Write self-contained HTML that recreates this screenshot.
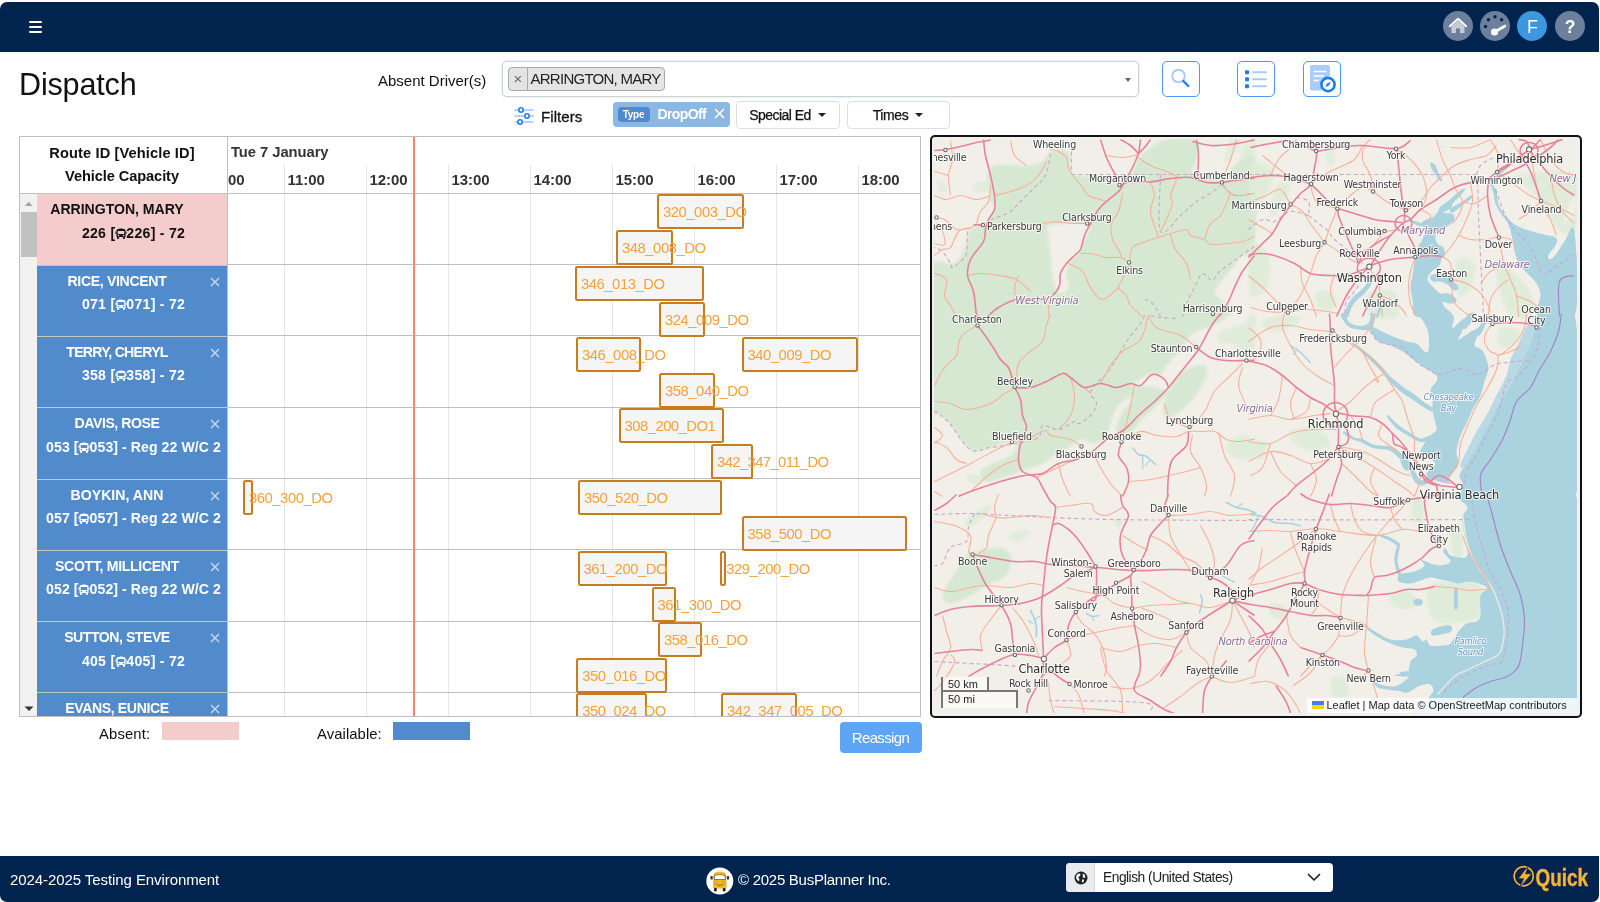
<!DOCTYPE html>
<html lang="en">
<head>
<meta charset="utf-8">
<title>Dispatch</title>
<style>
*{box-sizing:border-box;margin:0;padding:0}
html,body{width:1600px;height:902px;overflow:hidden;background:#fff}
body{font-family:"Liberation Sans",sans-serif;color:#111;position:relative;will-change:transform}
.abs{position:absolute}
#topbar{position:absolute;left:0;top:2px;width:1599px;height:49.5px;background:#00244d;border-radius:7px 7px 0 0}
#burger{position:absolute;left:29px;top:19px;width:13px;height:12px}
#burger i{position:absolute;left:0;width:13px;height:2px;background:#fff;border-radius:1px}
.circ{position:absolute;top:9px;width:30px;height:30px;border-radius:50%;background:#6c809b}
.circ svg{position:absolute;left:0;top:0}
#title{position:absolute;left:19px;top:64px;font-size:30.5px;line-height:40px;color:#111;white-space:nowrap}
#lblAbsent{position:absolute;left:378px;top:71px;font-size:15px;line-height:20px;color:#111}
#sel{position:absolute;left:502px;top:61px;width:637px;height:36px;border:1px solid #ccd3d6;border-radius:5px;background:#fff;box-shadow:0 0 0 1px #eef3f5}
#tag{position:absolute;left:5px;top:5px;width:157px;height:24px;background:#e4e4e4;border:1px solid #aaa;border-radius:4px;font-size:15px;line-height:22px;color:#222}
#tag .x{position:absolute;left:0;top:0;width:19px;height:22px;border-right:1px solid #aaa;text-align:center;color:#666;font-size:15px}
#tag .t{position:absolute;left:21.5px;top:0;white-space:nowrap}
#selarrow{position:absolute;left:622px;top:15.5px;width:0;height:0;border-left:3.5px solid transparent;border-right:3.5px solid transparent;border-top:4.5px solid #666}
.ibtn{position:absolute;top:61px;width:38px;height:36px;border:1px solid #4a99f5;border-radius:5px;background:#fff}
.ibtn svg{position:absolute;left:0;top:0}
#filters{position:absolute;left:541px;top:107px;font-size:15px;line-height:20px;color:#111;-webkit-text-stroke:0.3px #111}
#chip{position:absolute;left:612.5px;top:101.5px;width:117.5px;height:25.5px;background:#8db7e3;border-radius:4px}
#chip .b{position:absolute;left:5px;top:5.5px;width:32px;height:15px;background:#4f8ad0;border-radius:4px;color:#fff;font-size:10px;font-weight:bold;line-height:15px;text-align:center;letter-spacing:-0.3px}
#chip .t{position:absolute;left:45px;top:2px;color:#fff;font-size:14px;line-height:20px;font-weight:bold;letter-spacing:-0.6px}
#chip .x{position:absolute;left:101px;top:6px}
.dd{position:absolute;top:100.5px;height:28px;border:1px solid #dcdfe3;border-radius:4px;background:#fff;font-size:14px;line-height:26px;color:#111;text-align:center;-webkit-text-stroke:0.25px #111}
.dd b{display:inline-block;width:0;height:0;border-left:4px solid transparent;border-right:4px solid transparent;border-top:4.5px solid #222;vertical-align:middle;margin-left:7px;margin-top:-2px}
#tl{position:absolute;left:19px;top:136px;width:902px;height:580.5px;border:1px solid #bfbfbf;overflow:hidden;background:#fff}
#tl .hd1{position:absolute;left:0;top:0;width:204px;height:57px;text-align:center;font-weight:bold;font-size:14.6px;line-height:23px;padding-top:5px;color:#111}
#tl .hline{position:absolute;left:0;height:1px;background:#bfbfbf}
#tl .vline{position:absolute;top:28px;width:1px;height:560px;background:#e5e5e5}
#tl .hr{position:absolute;top:34px;font-size:15px;font-weight:bold;line-height:18px;color:#333;letter-spacing:-0.05px}
#now{position:absolute;left:393px;top:0;width:2px;height:580px;background:#ff7f6e;z-index:5}
#sb{position:absolute;left:0;top:57px;width:17px;height:524px;background:#f1f1f1}
#sb .th{position:absolute;left:1px;top:18px;width:15.5px;height:44.5px;background:#c1c1c1}
.row{position:absolute;left:17px;width:189.5px;height:71.4px;border-top:1px solid #c4c4c4;font-weight:bold;font-size:14.1px;line-height:24px;text-align:center;color:#fff;background:#528bcc}
.row.ab{background:#f5cccc;color:#111}
.row .n{position:absolute;left:0;width:160px;top:3px;white-space:nowrap}
.row .v{position:absolute;left:2px;width:189px;top:26.5px;white-space:nowrap}
.row .x{position:absolute;left:173px;top:11px}
.it{position:absolute;height:35px;border:2px solid #c77c20;border-radius:2.5px;background:#f5f5f5;color:#f4a23c;font-size:14.8px;line-height:32px;white-space:nowrap;z-index:3}
.it span{margin-left:4px}
#legA,#legB{position:absolute;top:724px;font-size:14.8px;line-height:20px;color:#111}
.sw{position:absolute;top:721.5px;width:77px;height:18.5px}
#reassign{position:absolute;left:839.5px;top:721.5px;width:82px;height:31.5px;background:#5ea5f6;border-radius:4px;color:#fff;font-size:15px;line-height:31px;text-align:center}
#footer{position:absolute;left:0;top:855.5px;width:1599px;height:46.5px;background:#00244d;border-radius:0 0 7px 7px;color:#fff;font-size:15px}
#lang{position:absolute;left:1066px;top:7.5px;width:266.5px;height:29px;background:#fff;border-radius:4px;overflow:hidden;color:#222;font-size:14px;line-height:29px}
#lang .g{position:absolute;left:0;top:0;width:29px;height:29px;background:#e9ecef;border-right:1px solid #d5d9dd}
#mapbox{position:absolute;left:930px;top:135px;width:652px;height:583px;border:2px solid #111;border-radius:5px;background:#f0f0f0;overflow:hidden}
.sc{position:absolute;border:2px solid #777;background:rgba(255,255,255,0.6);font-size:11px;line-height:13px;padding:1px 0 0 5px;color:#222;white-space:nowrap}
#attr{position:absolute;left:373px;top:559px;width:270.500px;height:15.500px;background:rgba(255,255,255,0.8);font-size:11px;line-height:15.500px;padding-left:5px;color:#222;white-space:nowrap;letter-spacing:0}
#map{position:absolute;left:1.5px;top:1.5px;width:643.5px;height:574.5px;background:#f2efe9;overflow:hidden}
</style>
</head>
<body>
<div id="topbar">
  <div id="burger"><i style="top:0"></i><i style="top:5px"></i><i style="top:10px"></i></div>
  <div class="circ" style="left:1443px"><svg width="30" height="30" viewBox="0 0 30 30"><path d="M8.5 15.5 L15 9.5 L21.5 15.5 L21.5 22 L17 22 L17 17.5 L13 17.5 L13 22 L8.5 22 Z" fill="#c3ccd8"/><path d="M6.8 15.3 L15 7.8 L23.2 15.3" fill="none" stroke="#fff" stroke-width="2" stroke-linecap="round" stroke-linejoin="round"/></svg></div>
  <div class="circ" style="left:1479.5px"><svg width="30" height="30" viewBox="0 0 30 30"><circle cx="5.5" cy="15.5" r="1.7" fill="#00244d"/><circle cx="8.5" cy="8.7" r="1.7" fill="#00244d"/><circle cx="15" cy="5.8" r="1.7" fill="#00244d"/><circle cx="21.6" cy="8.7" r="1.7" fill="#00244d"/><path d="M15.5 20.5 L25 15" stroke="#fff" stroke-width="2.6" stroke-linecap="round"/><circle cx="14.5" cy="21" r="3.6" fill="#fff"/></svg></div>
  <div class="circ" style="left:1517px;background:#3b97e0"><svg width="30" height="30" viewBox="0 0 30 30"><text x="15.5" y="21.5" font-family="Liberation Sans, sans-serif" font-size="18" fill="#fff" text-anchor="middle">F</text></svg></div>
  <div class="circ" style="left:1554.5px"><svg width="30" height="30" viewBox="0 0 30 30"><text x="15" y="21.500" font-family="Liberation Sans, sans-serif" font-size="17.500" font-weight="bold" fill="#fff" text-anchor="middle">?</text></svg></div>
</div>

<div id="title"><span style="letter-spacing:-0.15px">Dispatch</span></div>
<div id="lblAbsent"><span style="letter-spacing:-0.00px">Absent Driver(s)</span></div>
<div id="sel">
  <div id="tag"><span class="x">×</span><span class="t"><span style="letter-spacing:-0.74px">ARRINGTON, MARY</span></span></div>
  <div id="selarrow"></div>
</div>
<div class="ibtn" style="left:1161.5px"><svg width="36" height="34" viewBox="0 0 36 34"><circle cx="15.5" cy="14" r="6.3" fill="none" stroke="#a9ccf8" stroke-width="2"/><path d="M20.3 19 L25.3 24" stroke="#1f7cf0" stroke-width="2.4" stroke-linecap="round"/></svg></div>
<div class="ibtn" style="left:1237px"><svg width="36" height="34" viewBox="0 0 36 34"><g fill="#1f7cf0"><rect x="7" y="8.3" width="4" height="4" rx="1"/><rect x="7" y="15.3" width="4" height="4" rx="1"/><rect x="7" y="22.3" width="4" height="4" rx="1"/></g><g stroke="#a9ccf8" stroke-width="2" stroke-linecap="round"><path d="M15 10.3H28"/><path d="M15 17.3H28"/><path d="M15 24.3H28"/></g></svg></div>
<div class="ibtn" style="left:1303px"><svg width="36" height="34" viewBox="0 0 36 34"><path d="M6 5 Q6 3 8 3 H24 Q26 3 26 5 V14 Q19 15 17 22 Q16.5 26 18 28.5 H8 Q6 28.500 6 26.500 Z" fill="#a9ccf8"/><g stroke="#fff" stroke-width="1.6"><path d="M9.5 9.500H22.500"/><path d="M9.500 14H20"/><path d="M9.500 18.500H15"/></g><circle cx="24" cy="22.500" r="6.600" fill="#fff" stroke="#1f7cf0" stroke-width="2.600"/><path d="M26.700 19.800 L25 23.500 L21.300 25.200 L23 21.500 Z" fill="#1f7cf0"/></svg></div>

<svg class="abs" style="left:514px;top:106px" width="20" height="20" viewBox="0 0 20 20"><g stroke="#9cc5f7" stroke-width="1.600" stroke-linecap="round"><path d="M1 4H19"/><path d="M1 10H19"/><path d="M1 16H19"/></g><g fill="#fff" stroke="#1f7cf0" stroke-width="1.600"><circle cx="7" cy="4" r="2.200"/><circle cx="13" cy="10" r="2.200"/><circle cx="6" cy="16" r="2.200"/></g></svg>
<div id="filters"><span style="letter-spacing:0.07px">Filters</span></div>
<div id="chip"><span class="b">Type</span><span class="t">DropOff</span><svg class="x" width="11" height="11" viewBox="0 0 11 11"><path d="M1.500 1.500 L9.500 9.500 M9.500 1.500 L1.500 9.500" stroke="#fff" stroke-width="1.500" stroke-linecap="round"/></svg></div>
<div class="dd" style="left:735.5px;width:104px"><span style="letter-spacing:-0.54px">Special Ed</span><b></b></div>
<div class="dd" style="left:846.5px;width:103px"><span style="letter-spacing:-0.42px">Times</span><b></b></div>

<div id="tl">
  <div class="hd1"><span style="letter-spacing:0.13px">Route ID [Vehicle ID]</span><br><span style="letter-spacing:-0.08px">Vehicle Capacity</span></div>
  <div class="abs" style="left:211.0px;top:5px;font-size:14.8px;font-weight:bold;line-height:20px;color:#333;white-space:nowrap"><span style="letter-spacing:-0.07px">Tue 7 January</span></div>
<div class="hr" style="left:208.0px">00</div>
<div class="vline" style="left:264.0px"></div>
<div class="hr" style="left:267.5px">11:00</div>
<div class="vline" style="left:346.0px"></div>
<div class="hr" style="left:349.5px">12:00</div>
<div class="vline" style="left:428.0px"></div>
<div class="hr" style="left:431.5px">13:00</div>
<div class="vline" style="left:510.0px"></div>
<div class="hr" style="left:513.5px">14:00</div>
<div class="vline" style="left:592.0px"></div>
<div class="hr" style="left:595.5px">15:00</div>
<div class="vline" style="left:674.0px"></div>
<div class="hr" style="left:677.5px">16:00</div>
<div class="vline" style="left:756.0px"></div>
<div class="hr" style="left:759.5px">17:00</div>
<div class="vline" style="left:838.0px"></div>
<div class="hr" style="left:841.5px">18:00</div>
<div class="abs" style="left:207.0px;top:0;width:1px;height:581px;background:#bfbfbf"></div>
  <div id="now"></div>
  <div class="hline" style="top:56px;width:902px"></div>
  <div id="sb"><div class="th"></div>
    <svg class="abs" style="left:3px;top:5.500px" width="12" height="8" viewBox="0 0 12 8"><path d="M1.800 6 L5.700 1.800 L9.600 6 Z" fill="#a3a3a3"/></svg>
    <svg class="abs" style="left:3px;top:511px" width="12" height="8" viewBox="0 0 12 8"><path d="M1.500 1.500 L6 6 L10.500 1.500 Z" fill="#333"/></svg>
  </div>
  <div class="hline" style="left:208.0px;top:127.1px;width:700px"></div>
<div class="row ab" style="top:56.3px"><span class="n"><span style="letter-spacing:-0.03px">ARRINGTON, MARY</span></span><span class="v"><span style="letter-spacing:0.26px">226 [<svg width="12" height="12" viewBox="0 0 11 12" style="vertical-align:-2px;margin:0 -0.5px"><path d="M2 1.2 Q5.5 0 9 1.2 Q10 1.6 10 2.8 V9 H1 V2.8 Q1 1.6 2 1.2 Z" fill="currentColor"/><rect x="2.2" y="3" width="6.6" height="3" rx="0.6" fill="#f5cccc"/><circle cx="3" cy="7.6" r="0.8" fill="#f5cccc"/><circle cx="8" cy="7.600" r="0.800" fill="#f5cccc"/><rect x="1.600" y="9" width="2" height="1.800" fill="currentColor"/><rect x="7.400" y="9" width="2" height="1.800" fill="currentColor"/><rect x="0" y="3.500" width="1" height="2.500" fill="currentColor"/><rect x="10" y="3.500" width="1" height="2.500" fill="currentColor"/></svg>226] - 72</span></span></div>
<div class="it" style="left:637.0px;top:57.3px;width:86.5px"><span style="letter-spacing:-0.45px">320_003_DO</span></div>
<div class="it" style="left:596.0px;top:93.3px;width:57.0px"><span style="letter-spacing:-0.45px">348_008_DO</span></div>
<div class="hline" style="left:208.0px;top:198.4px;width:700px"></div>
<div class="row" style="top:127.6px"><span class="n"><span style="letter-spacing:-0.34px">RICE, VINCENT</span></span><span class="v"><span style="letter-spacing:0.26px">071 [<svg width="12" height="12" viewBox="0 0 11 12" style="vertical-align:-2px;margin:0 -0.5px"><path d="M2 1.2 Q5.5 0 9 1.2 Q10 1.6 10 2.8 V9 H1 V2.8 Q1 1.6 2 1.2 Z" fill="currentColor"/><rect x="2.2" y="3" width="6.6" height="3" rx="0.6" fill="#528bcc"/><circle cx="3" cy="7.6" r="0.8" fill="#528bcc"/><circle cx="8" cy="7.600" r="0.800" fill="#528bcc"/><rect x="1.600" y="9" width="2" height="1.800" fill="currentColor"/><rect x="7.400" y="9" width="2" height="1.800" fill="currentColor"/><rect x="0" y="3.500" width="1" height="2.500" fill="currentColor"/><rect x="10" y="3.500" width="1" height="2.500" fill="currentColor"/></svg>071] - 72</span></span><svg class="x" width="10" height="10" viewBox="0 0 10 10"><path d="M1 1 L9 9 M9 1 L1 9" stroke="#c9dcf2" stroke-width="1.300"/></svg></div>
<div class="it" style="left:555.0px;top:128.6px;width:128.5px"><span style="letter-spacing:-0.45px">346_013_DO</span></div>
<div class="it" style="left:639.0px;top:164.6px;width:45.5px"><span style="letter-spacing:-0.45px">324_009_DO</span></div>
<div class="hline" style="left:208.0px;top:269.7px;width:700px"></div>
<div class="row" style="top:198.9px"><span class="n"><span style="letter-spacing:-0.73px">TERRY, CHERYL</span></span><span class="v"><span style="letter-spacing:0.26px">358 [<svg width="12" height="12" viewBox="0 0 11 12" style="vertical-align:-2px;margin:0 -0.5px"><path d="M2 1.2 Q5.5 0 9 1.2 Q10 1.6 10 2.8 V9 H1 V2.8 Q1 1.6 2 1.2 Z" fill="currentColor"/><rect x="2.2" y="3" width="6.6" height="3" rx="0.6" fill="#528bcc"/><circle cx="3" cy="7.6" r="0.8" fill="#528bcc"/><circle cx="8" cy="7.600" r="0.800" fill="#528bcc"/><rect x="1.600" y="9" width="2" height="1.800" fill="currentColor"/><rect x="7.400" y="9" width="2" height="1.800" fill="currentColor"/><rect x="0" y="3.500" width="1" height="2.500" fill="currentColor"/><rect x="10" y="3.500" width="1" height="2.500" fill="currentColor"/></svg>358] - 72</span></span><svg class="x" width="10" height="10" viewBox="0 0 10 10"><path d="M1 1 L9 9 M9 1 L1 9" stroke="#c9dcf2" stroke-width="1.300"/></svg></div>
<div class="it" style="left:556.0px;top:199.9px;width:64.5px"><span style="letter-spacing:-0.45px">346_008_DO</span></div>
<div class="it" style="left:721.5px;top:199.9px;width:116.0px"><span style="letter-spacing:-0.45px">340_009_DO</span></div>
<div class="it" style="left:639.0px;top:235.9px;width:56.0px"><span style="letter-spacing:-0.45px">358_040_DO</span></div>
<div class="hline" style="left:208.0px;top:341.0px;width:700px"></div>
<div class="row" style="top:270.2px"><span class="n"><span style="letter-spacing:-0.45px">DAVIS, ROSE</span></span><span class="v"><span style="letter-spacing:0.07px">053 [<svg width="12" height="12" viewBox="0 0 11 12" style="vertical-align:-2px;margin:0 -0.5px"><path d="M2 1.2 Q5.5 0 9 1.2 Q10 1.6 10 2.8 V9 H1 V2.8 Q1 1.6 2 1.2 Z" fill="currentColor"/><rect x="2.2" y="3" width="6.6" height="3" rx="0.6" fill="#528bcc"/><circle cx="3" cy="7.6" r="0.8" fill="#528bcc"/><circle cx="8" cy="7.600" r="0.800" fill="#528bcc"/><rect x="1.600" y="9" width="2" height="1.800" fill="currentColor"/><rect x="7.400" y="9" width="2" height="1.800" fill="currentColor"/><rect x="0" y="3.500" width="1" height="2.500" fill="currentColor"/><rect x="10" y="3.500" width="1" height="2.500" fill="currentColor"/></svg>053] - Reg 22 W/C 2</span></span><svg class="x" width="10" height="10" viewBox="0 0 10 10"><path d="M1 1 L9 9 M9 1 L1 9" stroke="#c9dcf2" stroke-width="1.300"/></svg></div>
<div class="it" style="left:598.6px;top:271.2px;width:105.9px"><span style="letter-spacing:-0.52px">308_200_DO1</span></div>
<div class="it" style="left:691.0px;top:307.2px;width:42.3px"><span style="letter-spacing:-0.60px">342_347_011_DO</span></div>
<div class="hline" style="left:208.0px;top:412.3px;width:700px"></div>
<div class="row" style="top:341.5px"><span class="n"><span style="letter-spacing:0.03px">BOYKIN, ANN</span></span><span class="v"><span style="letter-spacing:0.07px">057 [<svg width="12" height="12" viewBox="0 0 11 12" style="vertical-align:-2px;margin:0 -0.5px"><path d="M2 1.2 Q5.5 0 9 1.2 Q10 1.6 10 2.8 V9 H1 V2.8 Q1 1.6 2 1.2 Z" fill="currentColor"/><rect x="2.2" y="3" width="6.6" height="3" rx="0.6" fill="#528bcc"/><circle cx="3" cy="7.6" r="0.8" fill="#528bcc"/><circle cx="8" cy="7.600" r="0.800" fill="#528bcc"/><rect x="1.600" y="9" width="2" height="1.800" fill="currentColor"/><rect x="7.400" y="9" width="2" height="1.800" fill="currentColor"/><rect x="0" y="3.500" width="1" height="2.500" fill="currentColor"/><rect x="10" y="3.500" width="1" height="2.500" fill="currentColor"/></svg>057] - Reg 22 W/C 2</span></span><svg class="x" width="10" height="10" viewBox="0 0 10 10"><path d="M1 1 L9 9 M9 1 L1 9" stroke="#c9dcf2" stroke-width="1.300"/></svg></div>
<div class="it" style="left:223.0px;top:342.5px;width:10.0px"><span style="letter-spacing:-0.45px">360_300_DO</span></div>
<div class="it" style="left:558.0px;top:342.5px;width:144.4px"><span style="letter-spacing:-0.45px">350_520_DO</span></div>
<div class="it" style="left:721.6px;top:378.5px;width:165.7px"><span style="letter-spacing:-0.45px">358_500_DO</span></div>
<div class="hline" style="left:208.0px;top:483.6px;width:700px"></div>
<div class="row" style="top:412.8px"><span class="n"><span style="letter-spacing:-0.33px">SCOTT, MILLICENT</span></span><span class="v"><span style="letter-spacing:0.07px">052 [<svg width="12" height="12" viewBox="0 0 11 12" style="vertical-align:-2px;margin:0 -0.5px"><path d="M2 1.2 Q5.5 0 9 1.2 Q10 1.6 10 2.8 V9 H1 V2.8 Q1 1.6 2 1.2 Z" fill="currentColor"/><rect x="2.2" y="3" width="6.6" height="3" rx="0.6" fill="#528bcc"/><circle cx="3" cy="7.6" r="0.8" fill="#528bcc"/><circle cx="8" cy="7.600" r="0.800" fill="#528bcc"/><rect x="1.600" y="9" width="2" height="1.800" fill="currentColor"/><rect x="7.400" y="9" width="2" height="1.800" fill="currentColor"/><rect x="0" y="3.500" width="1" height="2.500" fill="currentColor"/><rect x="10" y="3.500" width="1" height="2.500" fill="currentColor"/></svg>052] - Reg 22 W/C 2</span></span><svg class="x" width="10" height="10" viewBox="0 0 10 10"><path d="M1 1 L9 9 M9 1 L1 9" stroke="#c9dcf2" stroke-width="1.300"/></svg></div>
<div class="it" style="left:557.5px;top:413.8px;width:89.5px"><span style="letter-spacing:-0.45px">361_200_DO</span></div>
<div class="it" style="left:700.3px;top:413.8px;width:5.4px"><span style="letter-spacing:-0.45px">329_200_DO</span></div>
<div class="it" style="left:631.6px;top:449.8px;width:24.6px"><span style="letter-spacing:-0.45px">361_300_DO</span></div>
<div class="hline" style="left:208.0px;top:554.9px;width:700px"></div>
<div class="row" style="top:484.1px"><span class="n"><span style="letter-spacing:-0.47px">SUTTON, STEVE</span></span><span class="v"><span style="letter-spacing:0.26px">405 [<svg width="12" height="12" viewBox="0 0 11 12" style="vertical-align:-2px;margin:0 -0.5px"><path d="M2 1.2 Q5.5 0 9 1.2 Q10 1.6 10 2.8 V9 H1 V2.8 Q1 1.6 2 1.2 Z" fill="currentColor"/><rect x="2.2" y="3" width="6.6" height="3" rx="0.6" fill="#528bcc"/><circle cx="3" cy="7.6" r="0.8" fill="#528bcc"/><circle cx="8" cy="7.600" r="0.800" fill="#528bcc"/><rect x="1.600" y="9" width="2" height="1.800" fill="currentColor"/><rect x="7.400" y="9" width="2" height="1.800" fill="currentColor"/><rect x="0" y="3.500" width="1" height="2.500" fill="currentColor"/><rect x="10" y="3.500" width="1" height="2.500" fill="currentColor"/></svg>405] - 72</span></span><svg class="x" width="10" height="10" viewBox="0 0 10 10"><path d="M1 1 L9 9 M9 1 L1 9" stroke="#c9dcf2" stroke-width="1.300"/></svg></div>
<div class="it" style="left:638.0px;top:485.1px;width:43.7px"><span style="letter-spacing:-0.45px">358_016_DO</span></div>
<div class="it" style="left:556.3px;top:521.1px;width:91.2px"><span style="letter-spacing:-0.45px">350_016_DO</span></div>
<div class="hline" style="left:208.0px;top:626.2px;width:700px"></div>
<div class="row" style="top:555.4px"><span class="n"><span style="letter-spacing:-0.39px">EVANS, EUNICE</span></span><span class="v"><span style="letter-spacing:0.26px">350 [<svg width="12" height="12" viewBox="0 0 11 12" style="vertical-align:-2px;margin:0 -0.5px"><path d="M2 1.2 Q5.5 0 9 1.2 Q10 1.6 10 2.8 V9 H1 V2.8 Q1 1.6 2 1.2 Z" fill="currentColor"/><rect x="2.2" y="3" width="6.6" height="3" rx="0.6" fill="#528bcc"/><circle cx="3" cy="7.6" r="0.8" fill="#528bcc"/><circle cx="8" cy="7.600" r="0.800" fill="#528bcc"/><rect x="1.600" y="9" width="2" height="1.800" fill="currentColor"/><rect x="7.400" y="9" width="2" height="1.800" fill="currentColor"/><rect x="0" y="3.500" width="1" height="2.500" fill="currentColor"/><rect x="10" y="3.500" width="1" height="2.500" fill="currentColor"/></svg>350] - 72</span></span><svg class="x" width="10" height="10" viewBox="0 0 10 10"><path d="M1 1 L9 9 M9 1 L1 9" stroke="#c9dcf2" stroke-width="1.300"/></svg></div>
<div class="it" style="left:556.3px;top:556.4px;width:71.1px"><span style="letter-spacing:-0.45px">350_024_DO</span></div>
<div class="it" style="left:701.0px;top:556.4px;width:75.5px"><span style="letter-spacing:-0.39px">342_347_005_DO</span></div>
</div>

<div id="legA" style="left:99px"><span style="letter-spacing:0.14px">Absent:</span></div><div class="sw" style="left:162px;background:#f5cccc"></div>
<div id="legB" style="left:317px"><span style="letter-spacing:0.09px">Available:</span></div><div class="sw" style="left:393px;background:#528bcc"></div>
<div id="reassign"><span style="letter-spacing:-0.62px">Reassign</span></div>

<div id="mapbox"><div id="map"><svg width="643.5" height="574.5" viewBox="933.5 138.5 643.5 574.5" style="position:absolute;left:0;top:0" font-family="'DejaVu Sans Condensed', 'DejaVu Sans', 'Liberation Sans', sans-serif">
<defs><filter id="bl" x="-5%" y="-5%" width="110%" height="110%"><feGaussianBlur stdDeviation="1.6"/></filter><filter id="b2" x="-5%" y="-5%" width="110%" height="110%"><feGaussianBlur stdDeviation="0.5"/></filter></defs>
<rect x="933.5" y="138.5" width="643.5" height="574.5" fill="#f2efe9"/>
<g filter="url(#bl)" fill="#d6e8d1"><path d="M1050.0 151.0 C1053.3 149.0 1058.7 148.3 1062.0 149.0 C1065.3 149.7 1068.7 151.0 1070.0 155.0 C1071.3 159.0 1068.0 169.7 1070.0 173.0 C1072.0 176.3 1076.7 173.7 1082.0 175.0 C1087.3 176.3 1096.0 179.7 1102.0 181.0 C1108.0 182.3 1113.3 184.0 1118.0 183.0 C1122.7 182.0 1126.7 179.0 1130.0 175.0 C1133.3 171.0 1134.7 163.7 1138.0 159.0 C1141.3 154.3 1145.3 150.3 1150.0 147.0 C1154.7 143.7 1158.3 140.3 1166.0 139.0 C1173.7 137.7 1191.0 135.7 1196.0 139.0 C1201.0 142.3 1196.7 153.3 1196.0 159.0 C1195.3 164.7 1189.7 170.3 1192.0 173.0 C1194.3 175.7 1205.3 173.7 1210.0 175.0 C1214.7 176.3 1216.0 182.7 1220.0 181.0 C1224.0 179.3 1228.3 169.3 1234.0 165.0 C1239.7 160.7 1250.7 141.3 1254.0 155.0 C1257.3 168.7 1256.0 230.3 1254.0 247.0 C1252.0 263.7 1246.7 250.3 1242.0 255.0 C1237.3 259.7 1230.7 269.0 1226.0 275.0 C1221.3 281.0 1216.7 283.7 1214.0 291.0 C1211.3 298.3 1257.3 314.3 1210.0 319.0 C1162.7 323.7 976.7 328.0 930.0 319.0 C883.3 310.0 926.0 274.3 930.0 265.0 C934.0 255.7 948.3 266.0 954.0 263.0 C959.7 260.0 961.3 252.7 964.0 247.0 C966.7 241.3 966.7 232.8 970.0 229.0 C973.3 225.2 980.7 225.7 984.0 224.0 C987.3 222.3 988.3 221.8 990.0 219.0 C991.7 216.2 994.2 211.0 994.0 207.0 C993.8 203.0 989.7 201.7 989.0 195.0 C988.3 188.3 983.8 172.0 990.0 167.0 C996.2 162.0 1017.3 166.0 1026.0 165.0 C1034.7 164.0 1038.0 163.3 1042.0 161.0 C1046.0 158.7 1046.7 153.0 1050.0 151.0Z"/><path d="M930.0 311.0 C976.7 294.7 1166.7 307.0 1210.0 311.0 C1253.3 315.0 1195.0 328.7 1190.0 335.0 C1185.0 341.3 1184.0 344.0 1180.0 349.0 C1176.0 354.0 1169.3 360.7 1166.0 365.0 C1162.7 369.3 1162.7 373.7 1160.0 375.0 C1157.3 376.3 1154.3 371.7 1150.0 373.0 C1145.7 374.3 1137.0 379.3 1134.0 383.0 C1131.0 386.7 1134.0 392.0 1132.0 395.0 C1130.0 398.0 1125.0 398.3 1122.0 401.0 C1119.0 403.7 1116.0 407.3 1114.0 411.0 C1112.0 414.7 1111.3 419.0 1110.0 423.0 C1108.7 427.0 1108.7 431.7 1106.0 435.0 C1103.3 438.3 1098.0 442.3 1094.0 443.0 C1090.0 443.7 1086.0 438.7 1082.0 439.0 C1078.0 439.3 1074.7 442.3 1070.0 445.0 C1065.3 447.7 1058.7 452.0 1054.0 455.0 C1049.3 458.0 1047.7 460.3 1042.0 463.0 C1036.3 465.7 1028.7 468.0 1020.0 471.0 C1011.3 474.0 996.7 480.3 990.0 481.0 C983.3 481.7 981.0 477.3 980.0 475.0 C979.0 472.7 979.0 470.3 984.0 467.0 C989.0 463.7 1004.7 458.7 1010.0 455.0 C1015.3 451.3 1016.0 447.3 1016.0 445.0 C1016.0 442.7 1014.3 440.7 1010.0 441.0 C1005.7 441.3 996.7 445.7 990.0 447.0 C983.3 448.3 976.7 452.8 970.0 449.0 C963.3 445.2 955.3 430.0 950.0 424.0 C944.7 418.0 941.3 415.5 938.0 413.0 C934.7 410.5 931.3 426.0 930.0 409.0 C928.7 392.0 883.3 327.3 930.0 311.0Z"/><path d="M1136.0 385.0 C1141.7 384.2 1161.7 387.7 1166.0 390.0 C1170.3 392.3 1164.7 395.5 1162.0 399.0 C1159.3 402.5 1154.0 407.0 1150.0 411.0 C1146.0 415.0 1141.3 419.5 1138.0 423.0 C1134.7 426.5 1133.7 430.8 1130.0 432.0 C1126.3 433.2 1117.3 433.5 1116.0 430.0 C1114.7 426.5 1119.7 415.5 1122.0 411.0 C1124.3 406.5 1128.3 405.7 1130.0 403.0 C1131.7 400.3 1131.0 398.0 1132.0 395.0 C1133.0 392.0 1130.3 385.8 1136.0 385.0Z"/><path d="M1178.0 375.0 C1181.0 372.3 1185.7 368.7 1190.0 367.0 C1194.3 365.3 1201.3 363.7 1204.0 365.0 C1206.7 366.3 1207.0 370.7 1206.0 375.0 C1205.0 379.3 1201.3 386.0 1198.0 391.0 C1194.7 396.0 1190.7 400.7 1186.0 405.0 C1181.3 409.3 1174.0 416.0 1170.0 417.0 C1166.0 418.0 1162.7 414.7 1162.0 411.0 C1161.3 407.3 1164.3 399.7 1166.0 395.0 C1167.7 390.3 1170.0 386.3 1172.0 383.0 C1174.0 379.7 1175.0 377.7 1178.0 375.0Z"/><path d="M966.0 555.0 C972.3 551.7 988.7 547.0 996.0 547.0 C1003.3 547.0 1008.3 550.3 1010.0 555.0 C1011.7 559.7 1009.3 570.3 1006.0 575.0 C1002.7 579.7 996.0 579.7 990.0 583.0 C984.0 586.3 976.7 591.7 970.0 595.0 C963.3 598.3 954.7 603.0 950.0 603.0 C945.3 603.0 942.0 599.0 942.0 595.0 C942.0 591.0 947.3 583.7 950.0 579.0 C952.7 574.3 955.3 571.0 958.0 567.0 C960.7 563.0 959.7 558.3 966.0 555.0Z"/></g>
<g filter="url(#bl)" fill="#deecd8" opacity="0.9"><path d="M938.0 181.0 C938.8 179.5 942.8 181.3 944.0 183.0 C945.2 184.7 945.8 189.5 945.0 191.0 C944.2 192.5 940.2 193.7 939.0 192.0 C937.8 190.3 937.2 182.5 938.0 181.0Z"/><path d="M973.0 183.0 C975.3 181.7 985.5 180.7 988.0 182.0 C990.5 183.3 990.3 189.7 988.0 191.0 C985.7 192.3 976.5 191.3 974.0 190.0 C971.5 188.7 970.7 184.3 973.0 183.0Z"/><path d="M1230.0 139.0 C1233.0 135.0 1241.3 136.7 1242.0 139.0 C1242.7 141.3 1237.0 149.0 1234.0 153.0 C1231.0 157.0 1224.7 165.3 1224.0 163.0 C1223.3 160.7 1227.0 143.0 1230.0 139.0Z"/><path d="M1242.0 147.0 C1244.0 144.0 1252.0 140.0 1254.0 141.0 C1256.0 142.0 1256.0 150.0 1254.0 153.0 C1252.0 156.0 1244.0 160.0 1242.0 159.0 C1240.0 158.0 1240.0 150.0 1242.0 147.0Z"/><path d="M1218.0 333.0 C1219.7 330.3 1226.0 328.7 1230.0 327.0 C1234.0 325.3 1238.0 325.3 1242.0 323.0 C1246.0 320.7 1252.0 309.0 1254.0 313.0 C1256.0 317.0 1256.0 341.0 1254.0 347.0 C1252.0 353.0 1246.0 349.7 1242.0 349.0 C1238.0 348.3 1233.7 344.0 1230.0 343.0 C1226.3 342.0 1222.0 344.7 1220.0 343.0 C1218.0 341.3 1216.3 335.7 1218.0 333.0Z"/><path d="M1226.0 443.0 C1228.0 439.7 1237.3 435.0 1242.0 435.0 C1246.7 435.0 1252.7 439.0 1254.0 443.0 C1255.3 447.0 1254.0 457.0 1250.0 459.0 C1246.0 461.0 1234.0 457.7 1230.0 455.0 C1226.0 452.3 1224.0 446.3 1226.0 443.0Z"/><path d="M968.0 473.0 C970.3 472.3 980.7 475.3 982.0 477.0 C983.3 478.7 978.3 482.3 976.0 483.0 C973.7 483.7 969.3 482.7 968.0 481.0 C966.7 479.3 965.7 473.7 968.0 473.0Z"/><path d="M1010.0 533.0 C1012.7 531.2 1025.3 529.3 1028.0 530.0 C1030.7 530.7 1028.7 535.2 1026.0 537.0 C1023.3 538.8 1014.7 541.7 1012.0 541.0 C1009.3 540.3 1007.3 534.8 1010.0 533.0Z"/><path d="M964.0 521.0 C964.7 518.7 969.7 515.8 974.0 513.0 C978.3 510.2 987.7 504.3 990.0 504.0 C992.3 503.7 991.3 507.2 988.0 511.0 C984.7 514.8 974.0 525.3 970.0 527.0 C966.0 528.7 963.3 523.3 964.0 521.0Z"/><path d="M1114.0 519.0 C1115.0 517.7 1121.0 517.3 1122.0 519.0 C1123.0 520.7 1121.0 527.7 1120.0 529.0 C1119.0 530.3 1117.0 528.7 1116.0 527.0 C1115.0 525.3 1113.0 520.3 1114.0 519.0Z"/><path d="M1250.0 165.0 C1252.0 156.3 1258.0 162.0 1262.0 163.0 C1266.0 164.0 1272.7 167.0 1274.0 171.0 C1275.3 175.0 1272.0 182.0 1270.0 187.0 C1268.0 192.0 1265.3 196.3 1262.0 201.0 C1258.7 205.7 1252.0 221.0 1250.0 215.0 C1248.0 209.0 1248.0 173.7 1250.0 165.0Z"/><path d="M1250.0 247.0 C1252.0 239.0 1258.7 244.3 1262.0 247.0 C1265.3 249.7 1269.3 256.3 1270.0 263.0 C1270.7 269.7 1269.3 281.7 1266.0 287.0 C1262.7 292.3 1252.7 301.7 1250.0 295.0 C1247.3 288.3 1248.0 255.0 1250.0 247.0Z"/><path d="M1316.0 291.0 C1318.7 288.7 1331.3 290.0 1334.0 293.0 C1336.7 296.0 1334.7 306.7 1332.0 309.0 C1329.3 311.3 1320.7 310.0 1318.0 307.0 C1315.3 304.0 1313.3 293.3 1316.0 291.0Z"/><path d="M1368.0 293.0 C1372.0 288.8 1389.3 287.2 1394.0 291.0 C1398.7 294.8 1400.0 311.8 1396.0 316.0 C1392.0 320.2 1374.7 319.8 1370.0 316.0 C1365.3 312.2 1364.0 297.2 1368.0 293.0Z"/><path d="M1516.0 175.0 C1524.0 173.0 1564.3 165.7 1574.0 175.0 C1583.7 184.3 1576.7 222.0 1574.0 231.0 C1571.3 240.0 1563.7 234.0 1558.0 229.0 C1552.3 224.0 1545.3 208.0 1540.0 201.0 C1534.7 194.0 1530.0 191.3 1526.0 187.0 C1522.0 182.7 1508.0 177.0 1516.0 175.0Z"/><path d="M1496.0 259.0 C1499.0 257.0 1510.3 269.7 1516.0 275.0 C1521.7 280.3 1527.0 284.3 1530.0 291.0 C1533.0 297.7 1537.3 311.0 1534.0 315.0 C1530.7 319.0 1516.0 319.7 1510.0 315.0 C1504.0 310.3 1500.3 296.3 1498.0 287.0 C1495.7 277.7 1493.0 261.0 1496.0 259.0Z"/><path d="M1326.0 153.0 C1327.2 151.0 1333.0 149.0 1334.0 151.0 C1335.0 153.0 1333.2 163.0 1332.0 165.0 C1330.8 167.0 1328.0 165.0 1327.0 163.0 C1326.0 161.0 1324.8 155.0 1326.0 153.0Z"/><path d="M1276.0 185.0 C1279.3 180.3 1288.7 180.3 1290.0 183.0 C1291.3 185.7 1286.7 195.7 1284.0 201.0 C1281.3 206.3 1276.3 213.3 1274.0 215.0 C1271.7 216.7 1269.7 216.0 1270.0 211.0 C1270.3 206.0 1272.7 189.7 1276.0 185.0Z"/><path d="M1456.0 259.0 C1458.7 253.7 1471.7 258.3 1474.0 263.0 C1476.3 267.7 1472.7 281.7 1470.0 287.0 C1467.3 292.3 1460.3 299.7 1458.0 295.0 C1455.7 290.3 1453.3 264.3 1456.0 259.0Z"/><path d="M1260.0 321.0 C1261.7 318.3 1273.3 315.7 1280.0 315.0 C1286.7 314.3 1298.3 315.0 1300.0 317.0 C1301.7 319.0 1295.0 324.7 1290.0 327.0 C1285.0 329.3 1275.0 332.0 1270.0 331.0 C1265.0 330.0 1258.3 323.7 1260.0 321.0Z"/><path d="M1290.0 431.0 C1293.7 428.3 1309.3 425.0 1316.0 427.0 C1322.7 429.0 1331.0 439.0 1330.0 443.0 C1329.0 447.0 1316.0 451.0 1310.0 451.0 C1304.0 451.0 1297.3 446.3 1294.0 443.0 C1290.7 439.7 1286.3 433.7 1290.0 431.0Z"/><path d="M1250.0 439.0 C1252.7 437.0 1264.0 439.7 1266.0 443.0 C1268.0 446.3 1264.7 457.0 1262.0 459.0 C1259.3 461.0 1252.0 458.3 1250.0 455.0 C1248.0 451.7 1247.3 441.0 1250.0 439.0Z"/><path d="M1500.0 327.0 C1503.7 325.0 1518.3 327.7 1520.0 331.0 C1521.7 334.3 1513.7 345.0 1510.0 347.0 C1506.3 349.0 1499.7 346.3 1498.0 343.0 C1496.3 339.7 1496.3 329.0 1500.0 327.0Z"/><path d="M1412.0 499.0 C1413.5 495.3 1420.2 495.3 1422.0 499.0 C1423.8 502.7 1424.5 517.3 1423.0 521.0 C1421.5 524.7 1414.8 524.7 1413.0 521.0 C1411.2 517.3 1410.5 502.7 1412.0 499.0Z"/><path d="M1450.0 525.0 C1451.3 520.3 1458.0 520.0 1460.0 525.0 C1462.0 530.0 1463.3 550.3 1462.0 555.0 C1460.7 559.7 1454.0 558.0 1452.0 553.0 C1450.0 548.0 1448.7 529.7 1450.0 525.0Z"/><path d="M1430.0 584.0 C1438.0 578.8 1469.7 578.8 1478.0 584.0 C1486.3 589.2 1482.0 608.8 1480.0 615.0 C1478.0 621.2 1472.3 619.7 1466.0 621.0 C1459.7 622.3 1448.0 624.0 1442.0 623.0 C1436.0 622.0 1432.0 621.5 1430.0 615.0 C1428.0 608.5 1422.0 589.2 1430.0 584.0Z"/><path d="M1390.0 595.0 C1392.7 592.3 1406.0 589.0 1410.0 591.0 C1414.0 593.0 1416.7 604.3 1414.0 607.0 C1411.3 609.7 1398.0 609.0 1394.0 607.0 C1390.0 605.0 1387.3 597.7 1390.0 595.0Z"/><path d="M1270.0 603.0 C1272.7 601.7 1284.0 604.3 1286.0 607.0 C1288.0 609.7 1284.7 617.7 1282.0 619.0 C1279.3 620.3 1272.0 617.7 1270.0 615.0 C1268.0 612.3 1267.3 604.3 1270.0 603.0Z"/><path d="M1330.8 678.9 C1332.5 675.7 1340.7 674.3 1343.5 676.8 C1346.3 679.2 1349.5 690.6 1347.8 693.8 C1346.0 696.9 1335.7 698.4 1332.9 695.9 C1330.0 693.4 1329.0 682.1 1330.8 678.9Z"/></g>
<g filter="url(#bl)" fill="#f2efe9"><path d="M1050.0 225.0 C1056.7 223.2 1082.3 221.7 1088.0 224.0 C1093.7 226.3 1085.7 234.2 1084.0 239.0 C1082.3 243.8 1080.7 249.0 1078.0 253.0 C1075.3 257.0 1070.0 259.3 1068.0 263.0 C1066.0 266.7 1066.0 271.0 1066.0 275.0 C1066.0 279.0 1069.3 284.0 1068.0 287.0 C1066.7 290.0 1060.7 295.0 1058.0 293.0 C1055.3 291.0 1053.3 281.3 1052.0 275.0 C1050.7 268.7 1050.7 261.7 1050.0 255.0 C1049.3 248.3 1048.0 240.0 1048.0 235.0 C1048.0 230.0 1043.3 226.8 1050.0 225.0Z"/><path d="M1562.0 223.0 C1562.0 225.7 1572.0 215.7 1574.0 211.0 C1576.0 206.3 1576.0 193.0 1574.0 195.0 C1572.0 197.0 1562.0 220.3 1562.0 223.0Z"/><path d="M1489.1 655.5 C1489.6 654.6 1496.7 652.8 1497.6 653.4 C1498.4 653.9 1495.8 658.3 1494.4 658.7 C1493.0 659.0 1488.5 656.4 1489.1 655.5Z"/></g>
<g fill="#aad3df" filter="url(#b2)"><path d="M1465.0 188.6 C1464.8 189.6 1462.0 192.8 1460.0 195.0 C1458.0 197.2 1454.7 199.8 1453.0 202.0 C1451.3 204.2 1451.7 206.3 1450.0 208.0 C1448.3 209.7 1442.7 211.1 1443.0 212.0 C1443.3 212.9 1450.2 212.2 1452.0 213.4 C1453.8 214.6 1454.7 217.1 1454.0 219.0 C1453.3 220.9 1450.2 223.3 1448.0 225.0 C1445.8 226.7 1443.2 227.3 1441.0 229.0 C1438.8 230.7 1435.7 232.7 1435.0 235.0 C1434.3 237.3 1435.7 241.0 1437.0 243.0 C1438.3 245.0 1441.8 245.0 1443.0 247.0 C1444.2 249.0 1444.7 253.2 1444.4 255.0 C1444.1 256.8 1441.9 256.3 1441.0 258.0 C1440.1 259.7 1440.7 262.8 1439.0 265.0 C1437.3 267.2 1433.0 268.7 1431.0 271.0 C1429.0 273.3 1426.7 276.3 1427.0 279.0 C1427.3 281.7 1430.7 284.3 1433.0 287.0 C1435.3 289.7 1439.3 292.0 1441.0 295.0 C1442.7 298.0 1441.3 301.5 1443.0 305.0 C1444.7 308.5 1455.5 314.2 1451.0 316.0 C1446.5 317.8 1422.4 318.5 1416.0 316.0 C1409.6 313.5 1413.4 305.8 1412.4 301.0 C1411.4 296.2 1410.1 291.3 1410.0 287.0 C1409.9 282.7 1411.3 279.7 1412.0 275.0 C1412.7 270.3 1413.6 263.7 1414.4 259.0 C1415.2 254.3 1415.7 250.3 1417.0 247.0 C1418.3 243.7 1420.8 242.0 1422.0 239.0 C1423.2 236.0 1424.2 231.7 1424.0 229.0 C1423.8 226.3 1420.7 224.7 1421.0 223.0 C1421.3 221.3 1424.2 220.0 1426.0 219.0 C1427.8 218.0 1430.2 218.2 1432.0 217.0 C1433.8 215.8 1435.7 213.8 1437.0 212.0 C1438.3 210.2 1438.3 207.8 1440.0 206.0 C1441.7 204.2 1444.7 202.8 1447.0 201.0 C1449.3 199.2 1451.7 197.0 1454.0 195.0 C1456.3 193.0 1459.2 190.1 1461.0 189.0 C1462.8 187.9 1465.2 187.6 1465.0 188.6Z"/><path d="M1430.0 275.0 C1431.7 273.7 1438.5 272.3 1442.0 273.0 C1445.5 273.7 1448.3 276.7 1451.0 279.0 C1453.7 281.3 1457.5 285.2 1458.0 287.0 C1458.5 288.8 1455.8 290.5 1454.0 290.0 C1452.2 289.5 1449.3 285.5 1447.0 284.0 C1444.7 282.5 1442.5 281.5 1440.0 281.0 C1437.5 280.5 1433.7 282.0 1432.0 281.0 C1430.3 280.0 1428.3 276.3 1430.0 275.0Z"/><path d="M1436.0 295.0 C1437.0 293.7 1444.7 292.3 1448.0 293.0 C1451.3 293.7 1455.3 297.3 1456.0 299.0 C1456.7 300.7 1454.3 302.7 1452.0 303.0 C1449.7 303.3 1444.7 302.3 1442.0 301.0 C1439.3 299.7 1435.0 296.3 1436.0 295.0Z"/><path d="M1430.0 162.0 C1430.7 161.5 1433.5 162.8 1435.0 165.0 C1436.5 167.2 1437.8 172.5 1439.0 175.0 C1440.2 177.5 1442.0 179.1 1442.0 180.0 C1442.0 180.9 1440.2 181.6 1439.0 180.6 C1437.8 179.6 1436.3 176.1 1435.0 174.0 C1433.7 171.9 1431.8 170.0 1431.0 168.0 C1430.2 166.0 1429.3 162.5 1430.0 162.0Z"/><path d="M1421.0 223.0 C1419.7 222.0 1413.8 220.3 1412.0 220.0 C1410.2 219.7 1408.7 220.4 1410.0 221.4 C1411.3 222.4 1418.2 225.7 1420.0 226.0 C1421.8 226.3 1422.3 224.0 1421.0 223.0Z"/><path d="M1450.0 208.0 C1451.7 206.2 1458.7 203.2 1462.0 201.0 C1465.3 198.8 1468.3 195.7 1470.0 195.0 C1471.7 194.3 1473.3 195.3 1472.0 197.0 C1470.7 198.7 1465.3 202.5 1462.0 205.0 C1458.7 207.5 1454.0 211.5 1452.0 212.0 C1450.0 212.5 1448.3 209.8 1450.0 208.0Z"/><path d="M1508.0 163.0 C1506.0 164.2 1501.0 168.8 1498.0 172.0 C1495.0 175.2 1491.2 179.5 1490.0 182.0 C1488.8 184.5 1490.5 185.2 1491.0 187.0 C1491.5 188.8 1492.3 190.3 1493.0 193.0 C1493.7 195.7 1493.7 199.5 1495.0 203.0 C1496.3 206.5 1498.8 210.5 1501.0 214.0 C1503.2 217.5 1506.2 219.8 1508.0 224.0 C1509.8 228.2 1511.0 234.5 1512.0 239.0 C1513.0 243.5 1512.8 246.8 1514.0 251.0 C1515.2 255.2 1516.8 260.3 1519.0 264.0 C1521.2 267.7 1524.2 269.8 1527.0 273.0 C1529.8 276.2 1533.8 279.3 1536.0 283.0 C1538.2 286.7 1539.7 289.5 1540.0 295.0 C1540.3 300.5 1532.3 312.5 1538.0 316.0 C1543.7 319.5 1568.0 330.2 1574.0 316.0 C1580.0 301.8 1575.7 243.5 1574.0 231.0 C1572.3 218.5 1567.0 237.3 1564.0 241.0 C1561.0 244.7 1558.3 250.0 1556.0 253.0 C1553.7 256.0 1551.3 258.7 1550.0 259.0 C1548.7 259.3 1547.0 257.7 1548.0 255.0 C1549.0 252.3 1554.8 246.0 1556.0 243.0 C1557.2 240.0 1556.7 238.4 1555.0 237.0 C1553.3 235.6 1550.2 235.7 1546.0 234.6 C1541.8 233.5 1535.0 232.2 1530.0 230.6 C1525.0 229.0 1519.7 227.0 1516.0 225.0 C1512.3 223.0 1510.7 221.4 1508.0 218.6 C1505.3 215.8 1501.8 211.3 1500.0 208.0 C1498.2 204.7 1497.7 202.0 1497.0 199.0 C1496.3 196.0 1496.7 192.5 1496.0 190.0 C1495.3 187.5 1492.3 186.7 1493.0 184.0 C1493.7 181.3 1497.2 177.2 1500.0 174.0 C1502.8 170.8 1508.7 166.8 1510.0 165.0 C1511.3 163.2 1510.0 161.8 1508.0 163.0Z"/><path d="M1368.0 273.0 C1368.7 273.2 1371.7 279.7 1371.0 283.0 C1370.3 286.3 1366.3 290.3 1364.0 293.0 C1361.7 295.7 1359.2 296.7 1357.0 299.0 C1354.8 301.3 1352.5 304.2 1351.0 307.0 C1349.5 309.8 1349.2 314.5 1348.0 316.0 C1346.8 317.5 1344.2 317.8 1344.0 316.0 C1343.8 314.2 1345.5 308.3 1347.0 305.0 C1348.5 301.7 1350.8 298.5 1353.0 296.0 C1355.2 293.5 1357.7 292.3 1360.0 290.0 C1362.3 287.7 1365.7 284.8 1367.0 282.0 C1368.3 279.2 1367.3 272.8 1368.0 273.0Z"/><path d="M1381.0 305.0 C1380.8 306.8 1378.9 314.2 1378.0 316.0 C1377.1 317.8 1375.4 317.8 1375.6 316.0 C1375.8 314.2 1378.1 306.8 1379.0 305.0 C1379.9 303.2 1381.2 303.2 1381.0 305.0Z"/><path d="M1415.6 313.0 C1420.7 312.3 1444.3 310.7 1450.4 313.0 C1456.5 315.3 1450.7 325.3 1452.0 327.0 C1453.3 328.7 1456.3 322.7 1458.0 323.0 C1459.7 323.3 1462.0 326.3 1462.0 329.0 C1462.0 331.7 1457.0 338.3 1458.0 339.0 C1459.0 339.7 1465.0 333.7 1468.0 333.0 C1471.0 332.3 1475.0 333.0 1476.0 335.0 C1477.0 337.0 1473.5 342.8 1474.0 345.0 C1474.5 347.2 1477.5 346.8 1479.0 348.0 C1480.5 349.2 1481.5 348.8 1483.0 352.0 C1484.5 355.2 1487.8 362.2 1488.0 367.0 C1488.2 371.8 1485.3 376.3 1484.0 381.0 C1482.7 385.7 1482.0 390.3 1480.0 395.0 C1478.0 399.7 1474.3 404.3 1472.0 409.0 C1469.7 413.7 1468.0 418.7 1466.0 423.0 C1464.0 427.3 1461.7 430.3 1460.0 435.0 C1458.3 439.7 1456.3 446.2 1456.0 451.0 C1455.7 455.8 1458.7 460.3 1458.0 464.0 C1457.3 467.7 1453.7 470.2 1452.0 473.0 C1450.3 475.8 1446.8 479.0 1448.0 481.0 C1449.2 483.0 1456.7 484.7 1459.0 485.0 C1461.3 485.3 1462.0 484.7 1462.0 483.0 C1462.0 481.3 1458.8 477.7 1459.0 475.0 C1459.2 472.3 1460.8 470.7 1463.0 467.0 C1465.2 463.3 1468.7 458.7 1472.0 453.0 C1475.3 447.3 1479.5 439.7 1483.0 433.0 C1486.5 426.3 1489.7 419.3 1493.0 413.0 C1496.3 406.7 1499.5 401.0 1503.0 395.0 C1506.5 389.0 1510.8 382.8 1514.0 377.0 C1517.2 371.2 1519.3 365.8 1522.0 360.0 C1524.7 354.2 1527.9 347.3 1530.0 342.0 C1532.1 336.7 1532.7 332.8 1534.4 328.0 C1536.1 323.2 1533.4 315.5 1540.0 313.0 C1546.6 310.5 1568.3 282.5 1574.0 313.0 C1579.7 343.5 1591.3 465.5 1574.0 496.0 C1556.7 526.5 1488.7 497.2 1470.0 496.0 C1451.3 494.8 1464.0 490.8 1462.0 489.0 C1460.0 487.2 1461.3 486.2 1458.0 485.0 C1454.7 483.8 1446.7 483.2 1442.0 482.0 C1437.3 480.8 1432.7 479.5 1430.0 478.0 C1427.3 476.5 1425.8 474.8 1426.0 473.0 C1426.2 471.2 1429.5 468.7 1431.0 467.0 C1432.5 465.3 1435.8 465.0 1435.0 463.0 C1434.2 461.0 1428.5 457.0 1426.0 455.0 C1423.5 453.0 1420.3 453.0 1420.0 451.0 C1419.7 449.0 1422.3 445.7 1424.0 443.0 C1425.7 440.3 1428.0 437.3 1430.0 435.0 C1432.0 432.7 1435.3 431.7 1436.0 429.0 C1436.7 426.3 1434.7 422.3 1434.0 419.0 C1433.3 415.7 1432.3 412.3 1432.0 409.0 C1431.7 405.7 1432.3 402.3 1432.0 399.0 C1431.7 395.7 1429.3 392.0 1430.0 389.0 C1430.7 386.0 1435.0 383.3 1436.0 381.0 C1437.0 378.7 1437.7 377.2 1436.0 375.0 C1434.3 372.8 1429.0 370.0 1426.0 368.0 C1423.0 366.0 1420.7 364.8 1418.0 363.0 C1415.3 361.2 1412.7 359.0 1410.0 357.0 C1407.3 355.0 1405.3 353.0 1402.0 351.0 C1398.7 349.0 1394.0 346.7 1390.0 345.0 C1386.0 343.3 1381.3 343.3 1378.0 341.0 C1374.7 338.7 1371.7 334.0 1370.0 331.0 C1368.3 328.0 1367.3 323.7 1368.0 323.0 C1368.7 322.3 1370.3 325.0 1374.0 327.0 C1377.7 329.0 1384.7 332.7 1390.0 335.0 C1395.3 337.3 1401.7 339.7 1406.0 341.0 C1410.3 342.3 1413.0 341.3 1416.0 343.0 C1419.0 344.7 1422.0 349.8 1424.0 351.0 C1426.0 352.2 1427.3 353.0 1428.0 350.0 C1428.7 347.0 1428.7 337.5 1428.0 333.0 C1427.3 328.5 1425.3 325.7 1424.0 323.0 C1422.7 320.3 1421.4 318.7 1420.0 317.0 C1418.6 315.3 1410.5 313.7 1415.6 313.0Z"/><path d="M1344.0 313.0 C1345.2 314.3 1346.0 319.0 1348.0 321.0 C1350.0 323.0 1353.0 324.5 1356.0 325.0 C1359.0 325.5 1363.7 325.2 1366.0 324.0 C1368.3 322.8 1369.4 319.8 1370.0 318.0 C1370.6 316.2 1369.0 313.8 1369.6 313.0 C1370.2 312.2 1372.9 311.8 1373.6 313.0 C1374.3 314.2 1374.6 317.3 1374.0 320.0 C1373.4 322.7 1372.7 327.5 1370.0 329.0 C1367.3 330.5 1361.7 329.5 1358.0 329.0 C1354.3 328.5 1350.8 328.0 1348.0 326.0 C1345.2 324.0 1342.2 319.2 1341.0 317.0 C1339.8 314.8 1340.5 313.7 1341.0 313.0 C1341.5 312.3 1342.8 311.7 1344.0 313.0Z"/><path d="M1354.0 343.0 C1356.8 344.7 1365.3 351.0 1370.0 355.0 C1374.7 359.0 1378.7 363.5 1382.0 367.0 C1385.3 370.5 1386.7 372.8 1390.0 376.0 C1393.3 379.2 1398.0 383.0 1402.0 386.0 C1406.0 389.0 1410.3 391.3 1414.0 394.0 C1417.7 396.7 1421.0 399.8 1424.0 402.0 C1427.0 404.2 1430.8 405.5 1432.0 407.0 C1433.2 408.5 1432.7 411.2 1431.0 411.0 C1429.3 410.8 1425.2 408.0 1422.0 406.0 C1418.8 404.0 1415.7 401.5 1412.0 399.0 C1408.3 396.5 1404.0 394.2 1400.0 391.0 C1396.0 387.8 1391.3 383.5 1388.0 380.0 C1384.7 376.5 1383.3 373.7 1380.0 370.0 C1376.7 366.3 1372.5 362.2 1368.0 358.0 C1363.5 353.8 1355.3 347.1 1353.0 344.6 C1350.7 342.1 1351.2 341.3 1354.0 343.0Z"/><path d="M1388.0 415.0 C1389.8 416.3 1394.3 421.7 1398.0 424.6 C1401.7 427.5 1406.3 430.4 1410.0 432.6 C1413.7 434.8 1416.7 437.6 1420.0 438.0 C1423.3 438.4 1428.5 434.8 1430.0 435.0 C1431.5 435.2 1430.7 438.3 1429.0 439.4 C1427.3 440.5 1422.9 442.0 1419.6 441.4 C1416.3 440.8 1412.9 438.2 1409.0 436.0 C1405.1 433.8 1400.1 431.2 1396.4 428.0 C1392.7 424.8 1388.4 419.2 1387.0 417.0 C1385.6 414.8 1386.2 413.7 1388.0 415.0Z"/><path d="M1344.0 431.0 C1345.8 431.7 1351.0 435.7 1354.0 437.0 C1357.0 438.3 1358.7 437.3 1362.0 438.6 C1365.3 439.9 1369.3 443.4 1374.0 444.6 C1378.7 445.8 1385.3 444.4 1390.0 446.0 C1394.7 447.6 1398.7 451.3 1402.0 454.0 C1405.3 456.7 1407.7 458.7 1410.0 462.0 C1412.3 465.3 1414.2 471.0 1416.0 474.0 C1417.8 477.0 1419.0 479.8 1421.0 480.0 C1423.0 480.2 1426.3 475.2 1428.0 475.0 C1429.7 474.8 1432.0 477.3 1431.0 479.0 C1430.0 480.7 1424.8 484.7 1422.0 485.0 C1419.2 485.3 1416.3 484.0 1414.0 481.0 C1411.7 478.0 1410.3 470.7 1408.0 467.0 C1405.7 463.3 1403.2 461.8 1400.0 459.0 C1396.8 456.2 1393.3 451.8 1389.0 450.0 C1384.7 448.2 1378.7 449.3 1374.0 448.0 C1369.3 446.7 1365.0 443.7 1361.0 442.0 C1357.0 440.3 1353.0 439.5 1350.0 438.0 C1347.0 436.5 1344.0 434.2 1343.0 433.0 C1342.0 431.8 1342.2 430.3 1344.0 431.0Z"/><path d="M1400.0 459.0 C1400.7 457.7 1406.3 459.3 1408.0 461.0 C1409.7 462.7 1410.7 467.7 1410.0 469.0 C1409.3 470.3 1405.7 470.7 1404.0 469.0 C1402.3 467.3 1399.3 460.3 1400.0 459.0Z"/><path d="M1458.0 323.0 C1458.3 321.0 1463.2 318.7 1465.0 317.0 C1466.8 315.3 1467.3 313.7 1469.0 313.0 C1470.7 312.3 1474.8 311.3 1475.0 313.0 C1475.2 314.7 1472.0 320.3 1470.0 323.0 C1468.0 325.7 1465.0 329.0 1463.0 329.0 C1461.0 329.0 1457.7 325.0 1458.0 323.0Z"/><path d="M1468.0 333.0 C1468.5 331.3 1475.5 329.3 1478.0 327.0 C1480.5 324.7 1481.7 320.2 1483.0 319.0 C1484.3 317.8 1486.2 318.0 1486.0 320.0 C1485.8 322.0 1483.8 328.2 1482.0 331.0 C1480.2 333.8 1477.3 336.7 1475.0 337.0 C1472.7 337.3 1467.5 334.7 1468.0 333.0Z"/><path d="M1465.0 493.0 C1447.2 495.3 1467.5 503.0 1467.0 507.0 C1466.5 511.0 1462.5 512.3 1462.0 517.0 C1461.5 521.7 1463.2 530.0 1464.0 535.0 C1464.8 540.0 1466.8 543.3 1467.0 547.0 C1467.2 550.7 1467.8 555.7 1465.0 557.0 C1462.2 558.3 1453.8 556.0 1450.0 555.0 C1446.2 554.0 1442.0 550.0 1442.0 551.0 C1442.0 552.0 1450.3 558.7 1450.0 561.0 C1449.7 563.3 1443.3 564.7 1440.0 565.0 C1436.7 565.3 1433.3 564.0 1430.0 563.0 C1426.7 562.0 1421.0 558.7 1420.0 559.0 C1419.0 559.3 1425.0 563.0 1424.0 565.0 C1423.0 567.0 1417.7 569.7 1414.0 571.0 C1410.3 572.3 1404.7 572.3 1402.0 573.0 C1399.3 573.7 1398.7 573.7 1398.0 575.0 C1397.3 576.3 1396.0 579.7 1398.0 581.0 C1400.0 582.3 1406.3 583.2 1410.0 583.0 C1413.7 582.8 1416.7 581.0 1420.0 580.0 C1423.3 579.0 1426.7 577.2 1430.0 577.0 C1433.3 576.8 1436.7 578.3 1440.0 579.0 C1443.3 579.7 1447.0 580.3 1450.0 581.0 C1453.0 581.7 1455.0 583.0 1458.0 583.0 C1461.0 583.0 1464.7 581.0 1468.0 581.0 C1471.3 581.0 1474.8 581.8 1478.0 583.0 C1481.2 584.2 1486.7 586.0 1487.0 588.0 C1487.3 590.0 1481.2 590.5 1480.0 595.0 C1478.8 599.5 1480.7 610.7 1480.0 615.0 C1479.3 619.3 1478.3 619.7 1476.0 621.0 C1473.7 622.3 1469.0 621.3 1466.0 623.0 C1463.0 624.7 1460.7 627.7 1458.0 631.0 C1455.3 634.3 1452.7 640.7 1450.0 643.0 C1447.3 645.3 1445.3 644.7 1442.0 645.0 C1438.7 645.3 1432.7 646.0 1430.0 645.0 C1427.3 644.0 1427.3 639.7 1426.0 639.0 C1424.7 638.3 1423.7 641.7 1422.0 641.0 C1420.3 640.3 1418.7 635.3 1416.0 635.0 C1413.3 634.7 1410.3 638.3 1406.0 639.0 C1401.7 639.7 1394.7 640.0 1390.0 639.0 C1385.3 638.0 1381.7 635.0 1378.0 633.0 C1374.3 631.0 1369.8 627.7 1368.0 627.0 C1366.2 626.3 1365.3 627.3 1367.0 629.0 C1368.7 630.7 1374.2 634.7 1378.0 637.0 C1381.8 639.3 1386.0 641.3 1390.0 643.0 C1394.0 644.7 1398.0 646.0 1402.0 647.0 C1406.0 648.0 1411.7 647.7 1414.0 649.0 C1416.3 650.3 1416.7 653.0 1416.0 655.0 C1415.3 657.0 1411.3 658.3 1410.0 661.0 C1408.7 663.7 1408.7 668.5 1408.0 671.0 C1407.3 673.5 1378.3 675.2 1406.0 676.0 C1433.7 676.8 1546.0 706.5 1574.0 676.0 C1602.0 645.5 1592.2 523.5 1574.0 493.0 C1555.8 462.5 1482.8 490.7 1465.0 493.0Z"/><path d="M1399.0 543.0 C1398.5 542.8 1396.8 544.0 1396.0 547.0 C1395.2 550.0 1393.7 556.3 1394.0 561.0 C1394.3 565.7 1396.8 572.8 1398.0 575.0 C1399.2 577.2 1401.2 576.3 1401.0 574.0 C1400.8 571.7 1397.3 565.3 1397.0 561.0 C1396.7 556.7 1398.7 551.0 1399.0 548.0 C1399.3 545.0 1399.5 543.2 1399.0 543.0Z"/><path d="M1431.0 630.0 C1432.3 628.5 1436.8 626.8 1440.0 626.0 C1443.2 625.2 1448.2 624.2 1450.0 625.0 C1451.8 625.8 1452.3 629.5 1450.6 631.0 C1448.9 632.5 1443.1 633.3 1440.0 634.0 C1436.9 634.7 1433.5 635.7 1432.0 635.0 C1430.5 634.3 1429.7 631.5 1431.0 630.0Z"/><path d="M1413.0 600.0 C1413.6 598.9 1416.4 597.8 1418.0 598.0 C1419.6 598.2 1422.1 599.8 1422.4 601.0 C1422.7 602.2 1421.3 604.4 1420.0 605.0 C1418.7 605.6 1415.6 605.4 1414.4 604.6 C1413.2 603.8 1412.4 601.1 1413.0 600.0Z"/><path d="M1454.0 589.0 C1454.6 586.0 1456.5 586.0 1457.0 589.0 C1457.5 592.0 1457.6 604.0 1457.0 607.0 C1456.4 610.0 1454.1 610.0 1453.6 607.0 C1453.1 604.0 1453.4 592.0 1454.0 589.0Z"/><path d="M1380.0 534.0 C1381.7 534.2 1386.8 535.5 1390.0 537.0 C1393.2 538.5 1397.8 541.7 1399.0 543.0 C1400.2 544.3 1398.7 545.5 1397.0 545.0 C1395.3 544.5 1391.9 541.5 1389.0 540.0 C1386.1 538.5 1381.1 537.0 1379.6 536.0 C1378.1 535.0 1378.3 533.8 1380.0 534.0Z"/><path d="M1445.0 548.0 C1446.2 548.8 1447.8 553.2 1450.0 555.0 C1452.2 556.8 1457.0 558.0 1458.0 559.0 C1459.0 560.0 1457.7 561.3 1456.0 561.0 C1454.3 560.7 1450.2 558.8 1448.0 557.0 C1445.8 555.2 1443.5 551.5 1443.0 550.0 C1442.5 548.5 1443.8 547.2 1445.0 548.0Z"/><path d="M1413.6 670.4 C1381.9 671.5 1411.5 674.6 1408.3 677.2 C1405.1 679.7 1399.6 684.7 1394.5 685.7 C1389.4 686.7 1381.8 685.3 1377.5 683.1 C1373.3 680.9 1369.4 672.1 1369.0 672.5 C1368.6 672.9 1372.5 682.9 1375.4 685.7 C1378.2 688.4 1382.5 688.1 1386.0 688.9 C1389.5 689.6 1393.1 689.6 1396.6 690.1 C1400.2 690.7 1403.7 692.8 1407.3 692.1 C1410.8 691.3 1414.3 687.1 1417.9 685.7 C1421.4 684.3 1426.0 682.8 1428.5 683.6 C1431.0 684.3 1433.1 687.1 1432.8 689.9 C1432.4 692.8 1428.5 695.5 1426.4 700.6 C1424.3 705.6 1391.3 717.0 1420.0 720.3 C1448.7 723.6 1568.8 728.6 1598.5 720.3 C1628.3 712.0 1629.3 678.7 1598.5 670.4 C1567.7 662.1 1445.3 669.2 1413.6 670.4Z"/></g>
<g fill="#b9dae3" filter="url(#b2)"><path d="M1534.4 328.0 C1534.9 330.8 1532.1 336.7 1530.0 342.0 C1527.9 347.3 1524.7 354.2 1522.0 360.0 C1519.3 365.8 1517.2 371.2 1514.0 377.0 C1510.8 382.8 1506.5 389.0 1503.0 395.0 C1499.5 401.0 1496.3 406.7 1493.0 413.0 C1489.7 419.3 1486.5 426.3 1483.0 433.0 C1479.5 439.7 1475.3 447.3 1472.0 453.0 C1468.7 458.7 1465.0 465.2 1463.0 467.0 C1461.0 468.8 1459.3 467.0 1460.0 464.0 C1460.7 461.0 1464.3 454.5 1467.0 449.0 C1469.7 443.5 1472.7 437.0 1476.0 431.0 C1479.3 425.0 1483.7 419.0 1487.0 413.0 C1490.3 407.0 1492.8 401.3 1496.0 395.0 C1499.2 388.7 1503.7 381.0 1506.0 375.0 C1508.3 369.0 1508.0 364.3 1510.0 359.0 C1512.0 353.7 1515.2 348.7 1518.0 343.0 C1520.8 337.3 1524.3 327.5 1527.0 325.0 C1529.7 322.5 1533.9 325.2 1534.4 328.0Z"/></g>
<g fill="none" stroke="#aad3df" stroke-linecap="round"><path d="M1030.0 610.0 C1030.7 611.5 1033.0 616.2 1034.0 619.0 C1035.0 621.8 1035.7 624.2 1036.0 627.0 C1036.3 629.8 1035.7 634.5 1035.6 636.0" stroke-width="1.8"/><path d="M1034.0 619.0 L1039.0 616.0" stroke-width="1.4"/><path d="M1032.0 623.0 L1028.0 620.0" stroke-width="1.2"/><path d="M1086.0 613.0 C1087.0 613.5 1090.0 615.7 1092.0 616.0 C1094.0 616.3 1097.0 615.2 1098.0 615.0" stroke-width="1.5"/><path d="M1092.0 616.0 L1093.0 620.0" stroke-width="1.2"/><path d="M1200.0 594.0 C1200.3 595.2 1201.8 598.0 1201.6 601.0 C1201.4 604.0 1199.4 610.2 1199.0 612.0" stroke-width="1.6"/><path d="M1222.0 575.4 C1223.0 575.9 1226.1 577.6 1228.0 578.6 C1229.9 579.6 1232.7 580.9 1233.6 581.4" stroke-width="1.4"/><path d="M1226.0 502.0 C1227.7 502.8 1232.7 505.8 1236.0 507.0 C1239.3 508.2 1242.8 508.1 1246.0 509.0 C1249.2 509.9 1253.5 512.0 1255.0 512.6" stroke-width="1.8"/><path d="M1236.0 507.0 L1242.0 503.0" stroke-width="1.2"/><path d="M1250.0 514.0 C1252.0 514.3 1258.0 514.7 1262.0 516.0 C1266.0 517.3 1269.3 520.8 1274.0 522.0 C1278.7 523.2 1285.7 522.4 1290.0 523.0 C1294.3 523.6 1298.3 525.0 1300.0 525.4" stroke-width="1.5"/><path d="M1258.0 515.0 C1257.3 516.7 1255.3 522.3 1254.0 525.0 C1252.7 527.7 1250.7 530.0 1250.0 531.0" stroke-width="1.3"/><path d="M1132.4 447.4 C1133.3 448.5 1135.7 452.6 1138.0 454.0 C1140.3 455.4 1143.2 454.3 1146.0 456.0 C1148.8 457.7 1153.5 462.7 1155.0 464.0" stroke-width="1.6"/><path d="M1142.0 455.0 L1142.4 468.0" stroke-width="1.3"/><path d="M1149.0 460.0 L1145.0 465.0" stroke-width="1.2"/><path d="M1290.0 345.4 C1291.7 346.5 1296.7 349.2 1300.0 352.0 C1303.3 354.8 1308.0 360.3 1309.6 362.0" stroke-width="1.5"/><path d="M1296.0 349.0 L1293.0 354.0" stroke-width="1.1"/></g>
<path d="M1462.4 515.0 C1462.8 518.3 1463.7 528.7 1465.0 535.0 C1466.3 541.3 1467.8 547.7 1470.0 553.0 C1472.2 558.3 1475.3 562.7 1478.0 567.0 C1480.7 571.3 1483.6 575.4 1486.0 579.0 C1488.4 582.6 1490.4 584.6 1492.4 588.6 C1494.4 592.6 1496.3 597.9 1498.0 603.0 C1499.7 608.1 1501.5 613.7 1502.4 619.0 C1503.3 624.3 1504.0 629.7 1503.6 635.0 C1503.2 640.3 1501.4 647.5 1500.0 651.0 C1498.6 654.5 1498.0 654.2 1495.0 656.0 C1492.0 657.8 1486.8 659.7 1482.0 662.0 C1477.2 664.3 1470.7 667.7 1466.0 670.0 C1461.3 672.3 1458.8 672.0 1454.0 676.0 C1449.2 680.0 1439.8 690.8 1437.0 693.8" fill="none" stroke="#eeeadf" stroke-width="1.3"/>
<g fill="none" stroke="#cba3cf" stroke-width="1.15" stroke-dasharray="4 3" opacity="0.95"><path d="M1050.0 153.0 C1049.2 156.7 1047.7 169.3 1045.0 175.0 C1042.3 180.7 1038.2 182.7 1034.0 187.0 C1029.8 191.3 1024.0 197.0 1020.0 201.0 C1016.0 205.0 1014.0 208.3 1010.0 211.0 C1006.0 213.7 999.3 215.7 996.0 217.0 C992.7 218.3 991.0 218.7 990.0 219.0"/><path d="M967.0 231.0 C966.8 234.7 966.8 248.3 966.0 253.0 C965.2 257.7 964.3 256.7 962.0 259.0 C959.7 261.3 954.0 266.3 952.0 267.0 C950.0 267.7 951.7 265.7 950.0 263.0 C948.3 260.3 944.7 253.7 942.0 251.0 C939.3 248.3 935.3 247.7 934.0 247.0"/><path d="M1071.0 151.0 L1071.0 174.0"/><path d="M1071.0 174.0 C1085.8 174.0 1129.5 174.0 1160.0 174.0 C1190.5 174.0 1238.3 174.0 1254.0 174.0"/><path d="M1160.0 174.0 C1160.0 183.5 1156.7 224.2 1160.0 231.0 C1163.3 237.8 1174.0 220.0 1180.0 215.0 C1186.0 210.0 1191.0 204.7 1196.0 201.0 C1201.0 197.3 1206.0 195.7 1210.0 193.0 C1214.0 190.3 1218.3 186.3 1220.0 185.0"/><path d="M1254.0 246.0 C1251.3 247.8 1244.0 252.7 1238.0 257.0 C1232.0 261.3 1222.3 268.2 1218.0 272.0 C1213.7 275.8 1214.7 279.8 1212.0 280.0 C1209.3 280.2 1204.7 272.5 1202.0 273.0 C1199.3 273.5 1198.3 278.7 1196.0 283.0 C1193.7 287.3 1190.3 293.5 1188.0 299.0 C1185.7 304.5 1183.0 313.2 1182.0 316.0"/><path d="M1144.0 299.0 C1145.0 299.3 1148.0 299.3 1150.0 301.0 C1152.0 302.7 1154.3 306.5 1156.0 309.0 C1157.7 311.5 1159.3 314.8 1160.0 316.0"/><path d="M1222.0 185.0 C1224.0 186.7 1229.3 193.7 1234.0 195.0 C1238.7 196.3 1247.3 193.3 1250.0 193.0"/><path d="M1144.0 315.0 C1143.3 316.3 1143.0 318.7 1140.0 323.0 C1137.0 327.3 1129.7 335.7 1126.0 341.0 C1122.3 346.3 1121.0 350.0 1118.0 355.0 C1115.0 360.0 1111.7 366.3 1108.0 371.0 C1104.3 375.7 1099.0 379.3 1096.0 383.0 C1093.0 386.7 1090.0 389.7 1090.0 393.0 C1090.0 396.3 1096.0 399.3 1096.0 403.0 C1096.0 406.7 1093.0 411.7 1090.0 415.0 C1087.0 418.3 1080.7 422.0 1078.0 423.0 C1075.3 424.0 1077.3 420.0 1074.0 421.0 C1070.7 422.0 1063.3 428.3 1058.0 429.0 C1052.7 429.7 1045.3 423.7 1042.0 425.0 C1038.7 426.3 1042.3 434.0 1038.0 437.0 C1033.7 440.0 1024.0 441.3 1016.0 443.0 C1008.0 444.7 997.7 446.0 990.0 447.0 C982.3 448.0 976.7 452.8 970.0 449.0 C963.3 445.2 955.3 430.0 950.0 424.0 C944.7 418.0 940.7 415.2 938.0 413.0 C935.3 410.8 934.7 411.3 934.0 411.0"/><path d="M1150.0 315.0 C1151.7 315.3 1155.7 316.5 1160.0 317.0 C1164.3 317.5 1173.3 317.8 1176.0 318.0"/><path d="M934.0 514.0 C940.0 513.8 957.3 512.8 970.0 513.0 C982.7 513.2 996.7 514.3 1010.0 515.0 C1023.3 515.7 1033.3 516.3 1050.0 517.0 C1066.7 517.7 1090.0 518.6 1110.0 519.0 C1130.0 519.4 1146.0 519.4 1170.0 519.6 C1194.0 519.8 1240.0 519.9 1254.0 520.0"/><path d="M974.0 513.0 C973.0 515.3 969.3 522.3 968.0 527.0 C966.7 531.7 969.0 537.7 966.0 541.0 C963.0 544.3 954.0 543.3 950.0 547.0 C946.0 550.7 944.7 560.0 942.0 563.0 C939.3 566.0 935.3 564.7 934.0 565.0"/><path d="M934.0 661.0 C943.3 661.5 975.7 663.2 990.0 664.0 C1004.3 664.8 1015.0 665.7 1020.0 666.0"/><path d="M1048.0 700.0 C1063.7 700.3 1125.0 700.2 1142.0 702.0 C1159.0 703.8 1148.7 709.5 1150.0 711.0"/><path d="M1248.0 174.0 C1268.3 174.0 1332.0 174.0 1370.0 174.0 C1408.0 174.0 1458.3 174.0 1476.0 174.0"/><path d="M1476.0 174.0 C1476.7 172.5 1477.7 167.6 1480.0 165.0 C1482.3 162.4 1486.3 160.0 1490.0 158.6 C1493.7 157.2 1500.0 156.9 1502.0 156.6"/><path d="M1477.0 175.0 C1477.2 181.7 1477.5 201.7 1478.0 215.0 C1478.5 228.3 1479.2 238.2 1480.0 255.0 C1480.8 271.8 1482.5 305.8 1483.0 316.0"/><path d="M1495.0 189.0 C1497.2 194.3 1502.2 211.3 1508.0 221.0 C1513.8 230.7 1524.7 238.7 1530.0 247.0 C1535.3 255.3 1537.3 266.7 1540.0 271.0 C1542.7 275.3 1542.7 274.3 1546.0 273.0 C1549.3 271.7 1555.3 266.2 1560.0 263.0 C1564.7 259.8 1571.7 255.5 1574.0 254.0"/><path d="M1308.0 215.0 C1309.7 216.3 1315.0 220.7 1318.0 223.0 C1321.0 225.3 1323.3 226.3 1326.0 229.0 C1328.7 231.7 1331.0 236.0 1334.0 239.0 C1337.0 242.0 1340.7 244.3 1344.0 247.0 C1347.3 249.7 1351.0 252.3 1354.0 255.0 C1357.0 257.7 1360.7 261.7 1362.0 263.0"/><path d="M1248.0 229.0 C1250.3 227.3 1257.7 220.3 1262.0 219.0 C1266.3 217.7 1269.3 222.3 1274.0 221.0 C1278.7 219.7 1284.3 212.0 1290.0 211.0 C1295.7 210.0 1305.0 214.3 1308.0 215.0"/><path d="M1296.0 197.0 C1298.0 197.7 1306.0 198.0 1308.0 201.0 C1310.0 204.0 1308.0 212.7 1308.0 215.0"/><path d="M1362.0 279.0 C1360.7 281.0 1356.7 287.3 1354.0 291.0 C1351.3 294.7 1347.7 296.8 1346.0 301.0 C1344.3 305.2 1344.3 313.5 1344.0 316.0"/><path d="M1528.0 360.0 C1523.0 360.5 1504.7 361.7 1498.0 363.0 C1491.3 364.3 1491.7 366.2 1488.0 368.0 C1484.3 369.8 1480.7 374.0 1476.0 374.0 C1471.3 374.0 1466.0 368.0 1460.0 368.0 C1454.0 368.0 1445.7 374.0 1440.0 374.0 C1434.3 374.0 1430.0 370.2 1426.0 368.0 C1422.0 365.8 1420.0 364.5 1416.0 361.0 C1412.0 357.5 1405.7 349.7 1402.0 347.0 C1398.3 344.3 1398.0 346.0 1394.0 345.0 C1390.0 344.0 1382.0 343.3 1378.0 341.0 C1374.0 338.7 1371.3 332.7 1370.0 331.0"/><path d="M1483.0 313.0 L1484.0 323.0"/><path d="M1540.0 327.0 C1539.0 331.7 1537.7 347.0 1534.0 355.0 C1530.3 363.0 1522.7 370.3 1518.0 375.0 C1513.3 379.7 1509.3 377.0 1506.0 383.0 C1502.7 389.0 1501.3 402.3 1498.0 411.0 C1494.7 419.7 1489.7 427.7 1486.0 435.0 C1482.3 442.3 1479.3 449.0 1476.0 455.0 C1472.7 461.0 1468.0 466.3 1466.0 471.0 C1464.0 475.7 1464.3 481.0 1464.0 483.0"/><path d="M1248.0 519.0 C1265.0 519.1 1313.0 519.4 1350.0 519.4 C1387.0 519.4 1450.0 519.1 1470.0 519.0"/><path d="M1470.0 493.0 C1471.0 498.3 1473.3 513.7 1476.0 525.0 C1478.7 536.3 1482.7 551.3 1486.0 561.0 C1489.3 570.7 1492.7 576.0 1496.0 583.0 C1499.3 590.0 1504.0 596.0 1506.0 603.0 C1508.0 610.0 1508.3 617.0 1508.0 625.0 C1507.7 633.0 1505.6 644.9 1504.4 651.0 C1503.2 657.1 1503.2 659.6 1500.8 661.8 C1498.4 664.0 1493.6 662.9 1490.0 664.0 C1486.4 665.1 1484.7 665.7 1479.4 668.2 C1474.1 670.7 1464.6 674.5 1458.2 678.8 C1451.8 683.1 1444.0 691.3 1441.2 693.8"/></g>
<g fill="none" stroke="#a583cc" stroke-width="1.2"><path d="M1559.0 316.0 C1559.0 310.2 1556.5 287.8 1559.0 281.0 C1561.5 274.2 1571.5 276.0 1574.0 275.0"/><path d="M1561.0 313.0 C1560.5 316.0 1559.8 324.7 1558.0 331.0 C1556.2 337.3 1553.3 344.3 1550.0 351.0 C1546.7 357.7 1541.3 365.0 1538.0 371.0 C1534.7 377.0 1533.7 382.0 1530.0 387.0 C1526.3 392.0 1519.3 395.7 1516.0 401.0 C1512.7 406.3 1512.3 412.7 1510.0 419.0 C1507.7 425.3 1505.3 432.3 1502.0 439.0 C1498.7 445.7 1493.7 453.0 1490.0 459.0 C1486.3 465.0 1481.3 468.8 1480.0 475.0 C1478.7 481.2 1481.7 492.5 1482.0 496.0"/><path d="M1486.0 493.0 C1487.0 496.7 1489.7 506.3 1492.0 515.0 C1494.3 523.7 1497.0 535.7 1500.0 545.0 C1503.0 554.3 1506.7 562.7 1510.0 571.0 C1513.3 579.3 1517.7 587.0 1520.0 595.0 C1522.3 603.0 1523.7 610.7 1524.0 619.0 C1524.3 627.3 1522.8 637.7 1522.0 645.0 C1521.2 652.3 1520.2 658.8 1519.0 663.0 C1517.8 667.2 1516.9 668.1 1514.6 670.4 C1512.3 672.7 1509.1 675.0 1505.0 676.8 C1500.9 678.6 1495.0 679.2 1490.0 681.0 C1485.0 682.8 1479.8 684.7 1475.2 687.4 C1470.6 690.1 1464.5 695.4 1462.4 697.0"/></g>
<g fill="none" stroke="#f9b09a" stroke-width="1.1" stroke-linejoin="round"><path d="M934.0 217.0 C935.7 217.3 940.3 217.0 944.0 219.0 C947.7 221.0 951.7 227.7 956.0 229.0 C960.3 230.3 966.7 227.8 970.0 227.0 C973.3 226.2 975.0 224.5 976.0 224.0"/><path d="M1051.0 295.0 C1050.5 296.7 1048.4 301.5 1048.0 305.0 C1047.6 308.5 1048.3 314.2 1048.4 316.0"/><path d="M986.0 225.0 C990.0 224.8 1001.0 224.3 1010.0 224.0 C1019.0 223.7 1032.7 223.4 1040.0 223.0 C1047.3 222.6 1049.0 221.5 1054.0 221.4 C1059.0 221.3 1064.5 222.3 1070.0 222.6 C1075.5 222.9 1084.2 222.9 1087.0 223.0"/><path d="M1050.0 149.0 C1051.3 149.3 1055.3 149.7 1058.0 151.0 C1060.7 152.3 1064.3 154.3 1066.0 157.0 C1067.7 159.7 1066.7 163.7 1068.0 167.0 C1069.3 170.3 1071.7 173.7 1074.0 177.0 C1076.3 180.3 1079.7 184.0 1082.0 187.0 C1084.3 190.0 1085.0 193.0 1088.0 195.0 C1091.0 197.0 1097.0 198.0 1100.0 199.0 C1103.0 200.0 1105.0 200.7 1106.0 201.0"/><path d="M1080.0 253.0 C1081.7 253.0 1085.7 252.3 1090.0 253.0 C1094.3 253.7 1101.0 256.3 1106.0 257.0 C1111.0 257.7 1116.2 256.2 1120.0 257.0 C1123.8 257.8 1127.5 261.2 1129.0 262.0"/><path d="M1122.0 193.0 C1121.3 196.0 1119.8 206.0 1118.0 211.0 C1116.2 216.0 1112.0 218.3 1111.0 223.0 C1110.0 227.7 1110.8 234.7 1112.0 239.0 C1113.2 243.3 1116.5 246.0 1118.0 249.0 C1119.5 252.0 1120.5 255.7 1121.0 257.0"/><path d="M1129.0 262.0 C1129.5 259.5 1129.2 250.5 1132.0 247.0 C1134.8 243.5 1141.7 242.7 1146.0 241.0 C1150.3 239.3 1154.0 238.3 1158.0 237.0 C1162.0 235.7 1165.3 234.3 1170.0 233.0 C1174.7 231.7 1182.7 228.7 1186.0 229.0 C1189.3 229.3 1187.0 233.3 1190.0 235.0 C1193.0 236.7 1200.7 237.5 1204.0 239.0 C1207.3 240.5 1206.3 243.3 1210.0 244.0 C1213.7 244.7 1220.7 243.5 1226.0 243.0 C1231.3 242.5 1237.3 242.2 1242.0 241.0 C1246.7 239.8 1252.0 236.8 1254.0 236.0"/><path d="M1129.0 263.0 C1127.8 265.7 1123.8 275.0 1122.0 279.0 C1120.2 283.0 1117.3 284.3 1118.0 287.0 C1118.7 289.7 1124.0 292.0 1126.0 295.0 C1128.0 298.0 1127.3 301.5 1130.0 305.0 C1132.7 308.5 1140.0 314.2 1142.0 316.0"/><path d="M1176.0 179.0 C1175.0 181.7 1170.7 191.0 1170.0 195.0 C1169.3 199.0 1172.7 199.0 1172.0 203.0 C1171.3 207.0 1168.0 214.3 1166.0 219.0 C1164.0 223.7 1161.0 229.0 1160.0 231.0"/><path d="M934.0 255.0 C935.3 254.0 939.3 250.3 942.0 249.0 C944.7 247.7 947.3 250.0 950.0 247.0 C952.7 244.0 954.7 234.2 958.0 231.0 C961.3 227.8 968.0 228.5 970.0 228.0"/><path d="M934.0 273.0 C936.0 274.0 944.3 275.3 946.0 279.0 C947.7 282.7 943.3 290.7 944.0 295.0 C944.7 299.3 948.0 301.5 950.0 305.0 C952.0 308.5 955.0 314.2 956.0 316.0"/><path d="M934.0 243.0 C935.7 243.2 942.7 246.0 944.0 244.0 C945.3 242.0 943.3 234.5 942.0 231.0 C940.7 227.5 937.0 224.3 936.0 223.0"/><path d="M1106.0 155.0 C1108.7 155.3 1116.7 157.2 1122.0 157.0 C1127.3 156.8 1135.3 154.5 1138.0 154.0"/><path d="M1138.0 157.0 C1140.0 158.3 1145.3 162.7 1150.0 165.0 C1154.7 167.3 1161.0 168.8 1166.0 171.0 C1171.0 173.2 1177.7 176.8 1180.0 178.0"/><path d="M1236.0 139.0 C1235.0 142.3 1232.0 153.0 1230.0 159.0 C1228.0 165.0 1225.3 171.2 1224.0 175.0 C1222.7 178.8 1222.3 180.8 1222.0 182.0"/><path d="M1222.0 183.0 C1223.3 184.7 1226.7 191.0 1230.0 193.0 C1233.3 195.0 1238.0 195.1 1242.0 195.0 C1246.0 194.9 1252.0 193.0 1254.0 192.6"/><path d="M990.0 185.0 C989.7 187.7 989.7 196.7 988.0 201.0 C986.3 205.3 982.0 207.3 980.0 211.0 C978.0 214.7 976.7 221.0 976.0 223.0"/><path d="M934.0 481.0 C940.0 478.0 959.0 468.7 970.0 463.0 C981.0 457.3 993.0 450.5 1000.0 447.0 C1007.0 443.5 1010.0 442.8 1012.0 442.0"/><path d="M1016.0 381.0 C1016.3 378.0 1015.7 368.0 1018.0 363.0 C1020.3 358.0 1026.0 354.7 1030.0 351.0 C1034.0 347.3 1039.3 345.3 1042.0 341.0 C1044.7 336.7 1044.7 329.5 1046.0 325.0 C1047.3 320.5 1049.3 315.8 1050.0 314.0"/><path d="M1012.0 441.0 C1014.3 440.7 1020.7 440.8 1026.0 439.0 C1031.3 437.2 1040.0 430.7 1044.0 430.0 C1048.0 429.3 1045.7 433.5 1050.0 435.0 C1054.3 436.5 1064.8 437.2 1070.0 439.0 C1075.2 440.8 1079.2 444.8 1081.0 446.0"/><path d="M1134.0 385.0 C1133.3 388.3 1131.3 398.7 1130.0 405.0 C1128.7 411.3 1127.3 418.0 1126.0 423.0 C1124.7 428.0 1122.7 433.0 1122.0 435.0"/><path d="M1122.0 441.0 C1125.0 439.3 1134.3 432.0 1140.0 431.0 C1145.7 430.0 1150.0 434.2 1156.0 435.0 C1162.0 435.8 1170.7 436.7 1176.0 436.0 C1181.3 435.3 1184.0 431.8 1188.0 431.0 C1192.0 430.2 1195.7 431.0 1200.0 431.0 C1204.3 431.0 1209.7 429.7 1214.0 431.0 C1218.3 432.3 1222.0 437.3 1226.0 439.0 C1230.0 440.7 1233.3 441.1 1238.0 441.0 C1242.7 440.9 1251.3 439.0 1254.0 438.6"/><path d="M1190.0 427.0 C1192.3 424.3 1200.0 417.0 1204.0 411.0 C1208.0 405.0 1209.7 397.0 1214.0 391.0 C1218.3 385.0 1225.3 379.7 1230.0 375.0 C1234.7 370.3 1240.0 365.0 1242.0 363.0"/><path d="M934.0 385.0 C935.7 382.0 940.3 372.0 944.0 367.0 C947.7 362.0 953.3 360.0 956.0 355.0 C958.7 350.0 956.7 342.0 960.0 337.0 C963.3 332.0 973.3 327.0 976.0 325.0"/><path d="M934.0 401.0 C936.7 401.3 944.7 401.7 950.0 403.0 C955.3 404.3 959.3 409.0 966.0 409.0 C972.7 409.0 983.7 405.7 990.0 403.0 C996.3 400.3 1000.3 395.3 1004.0 393.0 C1007.7 390.7 1010.7 389.7 1012.0 389.0"/><path d="M934.0 441.0 C936.0 442.0 942.3 444.0 946.0 447.0 C949.7 450.0 952.7 456.3 956.0 459.0 C959.3 461.7 964.3 462.3 966.0 463.0"/><path d="M1192.0 435.0 C1191.7 437.7 1188.7 445.7 1190.0 451.0 C1191.3 456.3 1197.3 461.3 1200.0 467.0 C1202.7 472.7 1205.3 480.2 1206.0 485.0 C1206.7 489.8 1204.3 494.2 1204.0 496.0"/><path d="M1242.0 367.0 C1241.3 370.0 1237.3 378.7 1238.0 385.0 C1238.7 391.3 1243.3 400.0 1246.0 405.0 C1248.7 410.0 1252.7 413.3 1254.0 415.0"/><path d="M934.0 491.0 L942.0 496.0"/><path d="M1036.0 477.0 C1041.7 474.3 1062.3 464.7 1070.0 461.0 C1077.7 457.3 1080.0 456.0 1082.0 455.0"/><path d="M1164.0 403.0 C1165.0 405.7 1166.0 415.0 1170.0 419.0 C1174.0 423.0 1185.0 425.7 1188.0 427.0"/><path d="M1218.0 431.0 C1219.0 435.0 1221.3 447.7 1224.0 455.0 C1226.7 462.3 1233.0 468.2 1234.0 475.0 C1235.0 481.8 1230.7 492.5 1230.0 496.0"/><path d="M1148.0 315.0 C1149.3 317.0 1150.7 323.7 1156.0 327.0 C1161.3 330.3 1173.3 331.7 1180.0 335.0 C1186.7 338.3 1193.3 345.0 1196.0 347.0"/><path d="M1131.6 608.0 C1134.7 607.5 1143.6 605.7 1150.0 605.0 C1156.4 604.3 1163.3 604.3 1170.0 604.0 C1176.7 603.7 1183.3 602.5 1190.0 603.0 C1196.7 603.5 1203.0 607.5 1210.0 607.0 C1217.0 606.5 1228.3 601.2 1232.0 600.0"/><path d="M934.0 521.0 C937.3 521.7 948.0 522.7 954.0 525.0 C960.0 527.3 967.7 530.7 970.0 535.0 C972.3 539.3 967.7 547.8 968.0 551.0 C968.3 554.2 971.3 553.5 972.0 554.0"/><path d="M996.0 517.0 C994.7 520.0 989.7 530.0 988.0 535.0 C986.3 540.0 987.7 544.0 986.0 547.0 C984.3 550.0 979.3 552.0 978.0 553.0"/><path d="M934.0 587.0 C936.7 587.7 944.0 591.0 950.0 591.0 C956.0 591.0 964.0 588.0 970.0 587.0 C976.0 586.0 979.3 585.0 986.0 585.0 C992.7 585.0 1002.7 587.3 1010.0 587.0 C1017.3 586.7 1024.5 583.3 1030.0 583.0 C1035.5 582.7 1040.8 584.7 1043.0 585.0"/><path d="M942.0 615.0 C942.7 617.7 944.7 625.7 946.0 631.0 C947.3 636.3 950.7 642.0 950.0 647.0 C949.3 652.0 944.3 656.2 942.0 661.0 C939.7 665.8 937.0 673.5 936.0 676.0"/><path d="M1001.0 605.0 C999.2 607.3 993.5 614.0 990.0 619.0 C986.5 624.0 981.3 629.8 980.0 635.0 C978.7 640.2 981.7 647.5 982.0 650.0"/><path d="M1012.0 607.0 C1014.0 609.7 1020.3 617.0 1024.0 623.0 C1027.7 629.0 1031.7 637.7 1034.0 643.0 C1036.3 648.3 1037.3 653.0 1038.0 655.0"/><path d="M1054.0 507.0 C1056.7 506.7 1064.0 505.7 1070.0 505.0 C1076.0 504.3 1086.0 502.0 1090.0 503.0 C1094.0 504.0 1091.3 509.0 1094.0 511.0 C1096.7 513.0 1101.3 515.7 1106.0 515.0 C1110.7 514.3 1119.3 508.3 1122.0 507.0"/><path d="M1050.0 517.0 C1046.7 516.7 1036.7 515.0 1030.0 515.0 C1023.3 515.0 1015.7 516.7 1010.0 517.0 C1004.3 517.3 1001.0 517.7 996.0 517.0 C991.0 516.3 982.7 513.7 980.0 513.0"/><path d="M1066.0 587.0 C1068.7 587.7 1076.0 589.7 1082.0 591.0 C1088.0 592.3 1096.7 593.0 1102.0 595.0 C1107.3 597.0 1109.1 600.8 1114.0 603.0 C1118.9 605.2 1128.7 607.2 1131.6 608.0"/><path d="M1075.0 612.0 C1076.2 613.8 1078.8 619.5 1082.0 623.0 C1085.2 626.5 1090.7 629.0 1094.0 633.0 C1097.3 637.0 1100.0 641.7 1102.0 647.0 C1104.0 652.3 1105.7 660.2 1106.0 665.0 C1106.3 669.8 1104.3 674.2 1104.0 676.0"/><path d="M1066.0 639.0 C1068.7 638.3 1076.3 636.3 1082.0 635.0 C1087.7 633.7 1093.7 632.3 1100.0 631.0 C1106.3 629.7 1114.3 628.0 1120.0 627.0 C1125.7 626.0 1131.7 625.3 1134.0 625.0"/><path d="M1134.0 625.0 C1136.7 626.7 1144.0 632.7 1150.0 635.0 C1156.0 637.3 1164.0 639.5 1170.0 639.0 C1176.0 638.5 1183.3 633.2 1186.0 632.0"/><path d="M1168.0 515.0 C1168.3 518.3 1168.3 529.0 1170.0 535.0 C1171.7 541.0 1174.7 545.2 1178.0 551.0 C1181.3 556.8 1188.0 566.8 1190.0 570.0"/><path d="M1150.0 535.0 C1152.7 536.3 1161.0 539.7 1166.0 543.0 C1171.0 546.3 1175.0 551.7 1180.0 555.0 C1185.0 558.3 1191.0 559.3 1196.0 563.0 C1201.0 566.7 1207.7 574.7 1210.0 577.0"/><path d="M1168.0 515.0 C1171.7 514.8 1183.0 514.7 1190.0 514.0 C1197.0 513.3 1203.3 510.8 1210.0 511.0 C1216.7 511.2 1222.7 514.7 1230.0 515.0 C1237.3 515.3 1250.0 513.3 1254.0 513.0"/><path d="M1200.0 525.0 C1201.7 528.3 1207.7 538.7 1210.0 545.0 C1212.3 551.3 1214.0 557.7 1214.0 563.0 C1214.0 568.3 1210.7 574.7 1210.0 577.0"/><path d="M1186.0 632.0 C1186.7 634.5 1186.7 642.2 1190.0 647.0 C1193.3 651.8 1202.4 656.2 1206.0 661.0 C1209.6 665.8 1210.7 673.5 1211.6 676.0"/><path d="M1140.0 607.0 C1143.3 608.3 1154.0 612.3 1160.0 615.0 C1166.0 617.7 1171.7 620.2 1176.0 623.0 C1180.3 625.8 1184.3 630.5 1186.0 632.0"/><path d="M1232.0 600.0 C1231.7 603.2 1232.0 612.5 1230.0 619.0 C1228.0 625.5 1222.7 633.0 1220.0 639.0 C1217.3 645.0 1215.4 648.8 1214.0 655.0 C1212.6 661.2 1212.0 672.5 1211.6 676.0"/><path d="M1232.0 600.0 C1233.7 603.2 1239.0 613.2 1242.0 619.0 C1245.0 624.8 1248.0 630.3 1250.0 635.0 C1252.0 639.7 1253.3 645.0 1254.0 647.0"/><path d="M1142.0 581.0 C1145.0 582.7 1154.7 588.0 1160.0 591.0 C1165.3 594.0 1169.0 597.0 1174.0 599.0 C1179.0 601.0 1187.3 602.3 1190.0 603.0"/><path d="M1122.0 535.0 C1124.7 536.7 1134.0 542.7 1138.0 545.0 C1142.0 547.3 1144.7 548.3 1146.0 549.0"/><path d="M1042.0 676.0 C1044.7 674.2 1053.3 668.5 1058.0 665.0 C1062.7 661.5 1068.7 659.3 1070.0 655.0 C1071.3 650.7 1066.7 641.7 1066.0 639.0"/><path d="M1100.0 647.0 C1103.3 647.7 1113.7 651.3 1120.0 651.0 C1126.3 650.7 1132.0 646.3 1138.0 645.0 C1144.0 643.7 1149.7 642.7 1156.0 643.0 C1162.3 643.3 1172.7 646.3 1176.0 647.0"/><path d="M996.0 517.0 C995.7 515.3 993.7 510.8 994.0 507.0 C994.3 503.2 997.3 496.2 998.0 494.0"/><path d="M1069.0 683.4 C1070.5 685.2 1075.5 688.9 1078.0 694.0 C1080.5 699.1 1083.0 710.7 1084.0 714.0"/><path d="M1048.0 682.0 C1048.3 685.0 1049.0 694.7 1050.0 700.0 C1051.0 705.3 1053.3 711.7 1054.0 714.0"/><path d="M934.0 690.0 C935.3 688.7 938.7 686.7 942.0 682.0 C945.3 677.3 952.7 666.7 954.0 662.0 C955.3 657.3 950.7 655.3 950.0 654.0"/><path d="M1110.0 686.0 C1113.3 686.3 1123.3 689.0 1130.0 688.0 C1136.7 687.0 1143.3 684.7 1150.0 680.0 C1156.7 675.3 1164.7 665.0 1170.0 660.0 C1175.3 655.0 1180.0 651.7 1182.0 650.0"/><path d="M1162.0 708.0 C1165.0 706.0 1174.0 700.3 1180.0 696.0 C1186.0 691.7 1192.8 685.3 1198.0 682.0 C1203.2 678.7 1209.2 677.0 1211.4 676.0"/><path d="M1211.4 676.0 C1214.5 677.0 1222.9 682.0 1230.0 682.0 C1237.1 682.0 1250.0 677.0 1254.0 676.0"/><path d="M1100.0 648.0 C1101.0 651.7 1102.7 663.0 1106.0 670.0 C1109.3 677.0 1117.3 682.7 1120.0 690.0 C1122.7 697.3 1121.7 710.0 1122.0 714.0"/><path d="M1054.0 706.0 C1058.7 706.3 1072.7 707.3 1082.0 708.0 C1091.3 708.7 1102.0 709.0 1110.0 710.0 C1118.0 711.0 1126.7 713.3 1130.0 714.0"/><path d="M1442.0 256.0 C1443.3 257.2 1448.5 259.2 1450.0 263.0 C1451.5 266.8 1450.7 273.7 1451.0 279.0 C1451.3 284.3 1451.2 290.7 1452.0 295.0 C1452.8 299.3 1453.0 301.5 1456.0 305.0 C1459.0 308.5 1467.7 314.2 1470.0 316.0"/><path d="M1498.0 236.0 C1498.3 237.8 1499.0 242.2 1500.0 247.0 C1501.0 251.8 1502.3 259.7 1504.0 265.0 C1505.7 270.3 1508.0 274.0 1510.0 279.0 C1512.0 284.0 1514.7 288.8 1516.0 295.0 C1517.3 301.2 1517.7 312.5 1518.0 316.0"/><path d="M1530.0 149.0 C1530.7 153.3 1532.3 166.3 1534.0 175.0 C1535.7 183.7 1537.3 193.7 1540.0 201.0 C1542.7 208.3 1547.3 213.3 1550.0 219.0 C1552.7 224.7 1555.0 232.3 1556.0 235.0"/><path d="M1496.6 171.6 C1498.8 173.2 1505.1 177.4 1510.0 181.0 C1514.9 184.6 1520.9 189.8 1526.0 193.0 C1531.1 196.2 1535.3 198.1 1540.6 200.4 C1545.9 202.7 1552.4 204.6 1558.0 207.0 C1563.6 209.4 1571.3 213.7 1574.0 215.0"/><path d="M1336.8 208.2 C1335.7 211.0 1332.1 219.4 1330.0 225.0 C1327.9 230.6 1326.3 236.8 1324.0 241.8 C1321.7 246.8 1318.3 249.8 1316.0 255.0 C1313.7 260.2 1311.0 270.0 1310.0 273.0"/><path d="M1336.8 208.2 C1339.0 206.0 1345.8 198.5 1350.0 195.0 C1354.2 191.5 1358.2 187.7 1362.0 187.0 C1365.8 186.3 1368.6 188.7 1372.6 191.0 C1376.6 193.3 1380.5 197.9 1386.0 201.0 C1391.5 204.1 1402.3 208.3 1405.6 209.8"/><path d="M1310.6 183.4 C1312.5 182.0 1317.4 177.7 1322.0 175.0 C1326.6 172.3 1332.7 169.7 1338.0 167.0 C1343.3 164.3 1350.0 162.7 1354.0 159.0 C1358.0 155.3 1360.7 147.3 1362.0 145.0"/><path d="M1372.6 191.0 C1372.2 188.3 1371.8 180.3 1370.0 175.0 C1368.2 169.7 1363.0 164.0 1362.0 159.0 C1361.0 154.0 1362.7 148.3 1364.0 145.0 C1365.3 141.7 1369.0 140.0 1370.0 139.0"/><path d="M1405.6 209.8 C1408.0 208.3 1415.9 204.8 1420.0 201.0 C1424.1 197.2 1426.3 191.3 1430.0 187.0 C1433.7 182.7 1438.0 178.7 1442.0 175.0 C1446.0 171.3 1449.3 167.7 1454.0 165.0 C1458.7 162.3 1464.7 160.7 1470.0 159.0 C1475.3 157.3 1481.7 157.3 1486.0 155.0 C1490.3 152.7 1494.3 146.7 1496.0 145.0"/><path d="M1396.0 148.0 C1398.3 149.8 1405.7 154.5 1410.0 159.0 C1414.3 163.5 1419.3 169.0 1422.0 175.0 C1424.7 181.0 1426.3 189.3 1426.0 195.0 C1425.7 200.7 1421.0 206.7 1420.0 209.0"/><path d="M1436.0 139.0 C1437.0 142.3 1439.7 153.0 1442.0 159.0 C1444.3 165.0 1448.0 170.3 1450.0 175.0 C1452.0 179.7 1453.3 185.0 1454.0 187.0"/><path d="M1470.0 182.0 C1470.3 185.2 1472.7 194.8 1472.0 201.0 C1471.3 207.2 1468.3 213.3 1466.0 219.0 C1463.7 224.7 1460.7 230.3 1458.0 235.0 C1455.3 239.7 1452.7 243.5 1450.0 247.0 C1447.3 250.5 1443.3 254.5 1442.0 256.0"/><path d="M1451.0 279.0 C1453.5 279.7 1460.8 280.3 1466.0 283.0 C1471.2 285.7 1478.0 290.3 1482.0 295.0 C1486.0 299.7 1488.7 308.3 1490.0 311.0"/><path d="M1498.0 236.0 C1496.0 236.5 1490.7 238.5 1486.0 239.0 C1481.3 239.5 1474.7 239.7 1470.0 239.0 C1465.3 238.3 1460.0 235.7 1458.0 235.0"/><path d="M1290.0 204.0 C1292.0 205.2 1298.7 207.8 1302.0 211.0 C1305.3 214.2 1306.3 217.9 1310.0 223.0 C1313.7 228.1 1321.7 238.7 1324.0 241.8"/><path d="M1250.0 201.0 C1252.7 200.0 1261.0 197.0 1266.0 195.0 C1271.0 193.0 1276.0 187.5 1280.0 189.0 C1284.0 190.5 1288.3 201.5 1290.0 204.0"/><path d="M1248.0 219.0 C1250.3 220.3 1258.0 224.7 1262.0 227.0 C1266.0 229.3 1270.3 232.0 1272.0 233.0"/><path d="M1287.4 312.0 C1289.5 309.2 1296.2 301.5 1300.0 295.0 C1303.8 288.5 1308.3 276.7 1310.0 273.0"/><path d="M1287.4 312.0 C1285.2 309.8 1278.2 303.2 1274.0 299.0 C1269.8 294.8 1266.3 291.0 1262.0 287.0 C1257.7 283.0 1250.3 277.0 1248.0 275.0"/><path d="M1287.4 312.0 C1290.5 311.5 1299.6 309.2 1306.0 309.0 C1312.4 308.8 1320.7 310.3 1326.0 311.0 C1331.3 311.7 1336.0 312.7 1338.0 313.0"/><path d="M1379.4 295.0 C1381.2 295.7 1386.2 296.7 1390.0 299.0 C1393.8 301.3 1399.3 306.2 1402.0 309.0 C1404.7 311.8 1405.3 314.8 1406.0 316.0"/><path d="M1368.4 267.4 C1370.0 270.0 1376.2 278.4 1378.0 283.0 C1379.8 287.6 1378.7 289.5 1379.4 295.0 C1380.1 300.5 1381.6 312.5 1382.0 316.0"/><path d="M1415.0 256.6 C1414.2 259.0 1411.2 265.9 1410.0 271.0 C1408.8 276.1 1408.0 281.7 1408.0 287.0 C1408.0 292.3 1408.7 298.2 1410.0 303.0 C1411.3 307.8 1415.0 313.8 1416.0 316.0"/><path d="M1324.0 241.8 C1326.3 243.3 1333.7 248.1 1338.0 251.0 C1342.3 253.9 1346.7 257.0 1350.0 259.0 C1353.3 261.0 1356.7 262.3 1358.0 263.0"/><path d="M1516.0 295.0 C1518.3 296.0 1526.3 299.0 1530.0 301.0 C1533.7 303.0 1536.7 306.0 1538.0 307.0"/><path d="M1508.0 279.0 C1506.3 280.3 1501.0 283.7 1498.0 287.0 C1495.0 290.3 1491.7 294.2 1490.0 299.0 C1488.3 303.8 1488.3 313.2 1488.0 316.0"/><path d="M1540.0 201.0 C1538.3 202.7 1533.7 208.0 1530.0 211.0 C1526.3 214.0 1520.0 217.7 1518.0 219.0"/><path d="M1490.0 139.0 C1491.3 141.7 1496.9 149.6 1498.0 155.0 C1499.1 160.4 1496.8 168.8 1496.6 171.6"/><path d="M1450.0 147.0 C1453.3 147.0 1463.3 148.3 1470.0 147.0 C1476.7 145.7 1486.7 140.3 1490.0 139.0"/><path d="M1262.0 155.0 C1264.0 156.7 1269.3 161.3 1274.0 165.0 C1278.7 168.7 1287.3 175.0 1290.0 177.0"/><path d="M1338.0 446.0 C1340.7 447.5 1348.0 451.5 1354.0 455.0 C1360.0 458.5 1367.3 462.7 1374.0 467.0 C1380.7 471.3 1388.7 477.3 1394.0 481.0 C1399.3 484.7 1402.7 486.5 1406.0 489.0 C1409.3 491.5 1412.7 494.8 1414.0 496.0"/><path d="M1332.0 330.0 C1335.0 332.2 1345.0 339.5 1350.0 343.0 C1355.0 346.5 1357.7 347.7 1362.0 351.0 C1366.3 354.3 1372.3 359.3 1376.0 363.0 C1379.7 366.7 1381.0 368.7 1384.0 373.0 C1387.0 377.3 1391.0 384.3 1394.0 389.0 C1397.0 393.7 1400.0 396.7 1402.0 401.0 C1404.0 405.3 1404.7 410.7 1406.0 415.0 C1407.3 419.3 1408.7 423.0 1410.0 427.0 C1411.3 431.0 1413.3 435.0 1414.0 439.0 C1414.7 443.0 1412.9 445.2 1414.0 451.0 C1415.1 456.8 1419.5 469.8 1420.6 473.6"/><path d="M1336.0 411.0 C1338.3 409.3 1345.7 404.7 1350.0 401.0 C1354.3 397.3 1358.0 392.7 1362.0 389.0 C1366.0 385.3 1370.3 381.7 1374.0 379.0 C1377.7 376.3 1382.3 374.0 1384.0 373.0"/><path d="M1334.0 367.0 C1335.7 365.0 1340.3 359.0 1344.0 355.0 C1347.7 351.0 1351.7 347.7 1356.0 343.0 C1360.3 338.3 1366.8 332.0 1370.0 327.0 C1373.2 322.0 1374.2 315.3 1375.0 313.0"/><path d="M1492.0 323.0 C1491.0 324.3 1487.3 328.0 1486.0 331.0 C1484.7 334.0 1483.3 337.7 1484.0 341.0 C1484.7 344.3 1487.8 348.7 1490.0 351.0 C1492.2 353.3 1496.0 352.0 1497.0 355.0 C1498.0 358.0 1497.8 363.3 1496.0 369.0 C1494.2 374.7 1489.3 383.0 1486.0 389.0 C1482.7 395.0 1479.0 399.3 1476.0 405.0 C1473.0 410.7 1470.7 416.7 1468.0 423.0 C1465.3 429.3 1461.7 436.7 1460.0 443.0 C1458.3 449.3 1459.7 456.0 1458.0 461.0 C1456.3 466.0 1452.0 469.7 1450.0 473.0 C1448.0 476.3 1446.7 479.7 1446.0 481.0"/><path d="M1526.0 313.0 C1525.7 315.3 1525.7 322.3 1524.0 327.0 C1522.3 331.7 1519.7 336.7 1516.0 341.0 C1512.3 345.3 1505.2 350.7 1502.0 353.0 C1498.8 355.3 1497.8 354.7 1497.0 355.0"/><path d="M1248.0 341.0 C1251.7 338.7 1263.0 329.7 1270.0 327.0 C1277.0 324.3 1283.3 324.7 1290.0 325.0 C1296.7 325.3 1303.3 328.0 1310.0 329.0 C1316.7 330.0 1326.7 330.7 1330.0 331.0"/><path d="M1248.0 419.0 C1251.7 418.3 1263.0 415.0 1270.0 415.0 C1277.0 415.0 1282.7 419.0 1290.0 419.0 C1297.3 419.0 1307.3 416.0 1314.0 415.0 C1320.7 414.0 1327.3 413.3 1330.0 413.0"/><path d="M1248.0 441.0 C1251.7 441.3 1263.0 444.3 1270.0 443.0 C1277.0 441.7 1283.3 435.3 1290.0 433.0 C1296.7 430.7 1302.3 429.7 1310.0 429.0 C1317.7 428.3 1331.7 429.0 1336.0 429.0"/><path d="M1248.0 461.0 C1251.7 459.3 1263.0 452.0 1270.0 451.0 C1277.0 450.0 1283.3 453.0 1290.0 455.0 C1296.7 457.0 1303.7 462.3 1310.0 463.0 C1316.3 463.7 1325.0 459.7 1328.0 459.0"/><path d="M1248.0 327.0 C1250.0 329.0 1258.3 334.3 1260.0 339.0 C1261.7 343.7 1260.0 351.3 1258.0 355.0 C1256.0 358.7 1249.7 360.0 1248.0 361.0"/><path d="M1334.0 385.0 C1331.0 383.3 1321.7 379.0 1316.0 375.0 C1310.3 371.0 1304.3 366.0 1300.0 361.0 C1295.7 356.0 1293.0 350.7 1290.0 345.0 C1287.0 339.3 1283.0 332.3 1282.0 327.0 C1281.0 321.7 1283.7 315.3 1284.0 313.0"/><path d="M1338.0 446.0 C1342.0 446.8 1355.3 448.8 1362.0 451.0 C1368.7 453.2 1373.3 456.3 1378.0 459.0 C1382.7 461.7 1386.0 464.7 1390.0 467.0 C1394.0 469.3 1398.7 471.7 1402.0 473.0 C1405.3 474.3 1408.7 474.7 1410.0 475.0"/><path d="M1341.0 463.0 C1343.2 465.0 1349.2 470.3 1354.0 475.0 C1358.8 479.7 1366.0 487.5 1370.0 491.0 C1374.0 494.5 1376.7 495.2 1378.0 496.0"/><path d="M1270.0 443.0 C1268.7 447.0 1265.3 461.7 1262.0 467.0 C1258.7 472.3 1252.0 473.7 1250.0 475.0"/><path d="M1310.0 397.0 C1309.3 399.3 1309.3 407.3 1306.0 411.0 C1302.7 414.7 1292.7 417.7 1290.0 419.0"/><path d="M1492.0 323.0 C1490.0 322.7 1483.7 322.7 1480.0 321.0 C1476.3 319.3 1471.7 314.3 1470.0 313.0"/><path d="M1414.0 496.0 C1414.7 494.2 1416.9 488.7 1418.0 485.0 C1419.1 481.3 1420.2 475.5 1420.6 473.6"/><path d="M1382.0 423.0 C1381.3 425.0 1377.3 431.7 1378.0 435.0 C1378.7 438.3 1382.7 440.3 1386.0 443.0 C1389.3 445.7 1396.0 449.7 1398.0 451.0"/><path d="M1434.0 586.0 C1436.7 586.2 1444.0 586.3 1450.0 587.0 C1456.0 587.7 1463.3 589.8 1470.0 590.0 C1476.7 590.2 1486.7 588.3 1490.0 588.0"/><path d="M1368.0 671.0 C1367.3 667.7 1364.3 658.7 1364.0 651.0 C1363.7 643.3 1365.3 634.3 1366.0 625.0 C1366.7 615.7 1367.7 600.0 1368.0 595.0"/><path d="M1376.0 535.0 C1373.7 538.3 1366.3 548.3 1362.0 555.0 C1357.7 561.7 1353.3 568.3 1350.0 575.0 C1346.7 581.7 1343.7 588.0 1342.0 595.0 C1340.3 602.0 1340.3 613.3 1340.0 617.0"/><path d="M1248.0 531.0 C1251.7 530.8 1263.0 530.0 1270.0 530.0 C1277.0 530.0 1282.3 531.3 1290.0 531.0 C1297.7 530.7 1307.7 528.0 1316.0 528.0 C1324.3 528.0 1330.0 529.8 1340.0 531.0 C1350.0 532.2 1365.7 535.3 1376.0 535.0 C1386.3 534.7 1394.7 529.7 1402.0 529.0 C1409.3 528.3 1417.0 530.7 1420.0 531.0"/><path d="M1340.0 617.0 C1343.7 618.0 1357.3 621.3 1362.0 623.0 C1366.7 624.7 1367.0 626.3 1368.0 627.0"/><path d="M1340.0 617.0 C1339.7 620.0 1339.7 630.0 1338.0 635.0 C1336.3 640.0 1332.7 643.8 1330.0 647.0 C1327.3 650.2 1323.3 653.2 1322.0 654.4"/><path d="M1462.0 535.0 C1463.3 538.3 1467.0 549.3 1470.0 555.0 C1473.0 560.7 1476.7 563.7 1480.0 569.0 C1483.3 574.3 1488.3 584.0 1490.0 587.0"/><path d="M1376.0 535.0 C1378.3 532.3 1385.7 523.7 1390.0 519.0 C1394.3 514.3 1399.0 510.3 1402.0 507.0 C1405.0 503.7 1407.0 500.3 1408.0 499.0"/><path d="M1316.0 528.0 C1313.3 530.2 1306.0 536.5 1300.0 541.0 C1294.0 545.5 1286.3 550.7 1280.0 555.0 C1273.7 559.3 1267.3 563.0 1262.0 567.0 C1256.7 571.0 1250.3 577.0 1248.0 579.0"/><path d="M1304.0 583.0 C1305.7 585.7 1309.7 594.3 1314.0 599.0 C1318.3 603.7 1325.7 608.0 1330.0 611.0 C1334.3 614.0 1338.3 616.0 1340.0 617.0"/><path d="M1286.0 615.0 C1286.7 618.3 1287.7 629.7 1290.0 635.0 C1292.3 640.3 1298.3 645.0 1300.0 647.0"/><path d="M1262.0 547.0 C1261.3 550.3 1260.0 561.0 1258.0 567.0 C1256.0 573.0 1251.3 580.3 1250.0 583.0"/><path d="M1322.0 654.4 C1320.0 656.2 1313.7 661.4 1310.0 665.0 C1306.3 668.6 1301.7 674.2 1300.0 676.0"/><path d="M1270.0 643.0 C1268.0 645.7 1260.7 653.5 1258.0 659.0 C1255.3 664.5 1254.7 673.2 1254.0 676.0"/><path d="M1368.0 670.6 L1362.0 676.0"/><path d="M1304.0 571.0 C1301.7 571.7 1295.7 573.3 1290.0 575.0 C1284.3 576.7 1277.0 579.3 1270.0 581.0 C1263.0 582.7 1251.7 584.3 1248.0 585.0"/><path d="M1367.9 670.0 C1368.8 672.5 1371.7 680.2 1373.3 685.3 C1374.8 690.3 1376.4 694.3 1377.5 700.1 C1378.6 706.0 1379.3 716.9 1379.6 720.3"/><path d="M1250.0 683.1 C1252.8 682.8 1261.3 679.9 1267.0 681.0 C1272.7 682.1 1279.0 685.3 1284.0 689.5 C1289.0 693.8 1293.9 701.4 1296.8 706.5 C1299.6 711.6 1300.3 718.0 1301.0 720.3"/><path d="M1322.3 654.4 C1320.1 657.4 1314.5 667.4 1309.5 672.5 C1304.5 677.6 1295.3 683.1 1292.5 685.3"/><path d="M1270.0 175.0 C1271.3 172.3 1274.7 163.7 1278.0 159.0 C1281.3 154.3 1287.0 150.3 1290.0 147.0 C1293.0 143.7 1295.0 140.3 1296.0 139.0"/><path d="M1346.0 235.0 C1348.7 234.0 1355.7 229.7 1362.0 229.0 C1368.3 228.3 1378.0 230.6 1384.0 230.6 C1390.0 230.6 1395.7 229.3 1398.0 229.0"/><path d="M1354.0 253.0 C1356.7 252.0 1365.0 250.7 1370.0 247.0 C1375.0 243.3 1381.7 233.3 1384.0 230.6"/><path d="M1310.0 184.0 C1311.0 186.8 1311.5 197.0 1316.0 201.0 C1320.5 205.0 1333.3 207.0 1336.8 208.2"/><path d="M1420.0 209.0 C1421.7 210.0 1429.0 212.7 1430.0 215.0 C1431.0 217.3 1426.7 221.7 1426.0 223.0"/><path d="M1454.0 187.0 C1455.3 189.3 1461.3 196.3 1462.0 201.0 C1462.7 205.7 1459.7 211.3 1458.0 215.0 C1456.3 218.7 1453.0 221.7 1452.0 223.0"/><path d="M1487.0 195.0 C1484.8 196.3 1478.2 202.0 1474.0 203.0 C1469.8 204.0 1464.0 201.3 1462.0 201.0"/><path d="M1498.0 236.0 C1500.0 236.5 1507.0 237.2 1510.0 239.0 C1513.0 240.8 1515.0 245.7 1516.0 247.0"/><path d="M1504.0 265.0 C1501.7 266.0 1494.0 268.0 1490.0 271.0 C1486.0 274.0 1481.7 281.0 1480.0 283.0"/><path d="M1550.0 175.0 C1550.7 178.3 1552.0 189.0 1554.0 195.0 C1556.0 201.0 1558.7 206.3 1562.0 211.0 C1565.3 215.7 1572.0 221.0 1574.0 223.0"/><path d="M1510.0 139.0 L1520.0 155.0"/><path d="M1540.0 139.0 C1541.7 142.3 1546.3 153.7 1550.0 159.0 C1553.7 164.3 1558.0 168.3 1562.0 171.0 C1566.0 173.7 1572.0 174.3 1574.0 175.0"/><path d="M1250.0 307.0 C1252.7 307.7 1259.8 310.2 1266.0 311.0 C1272.2 311.8 1283.8 311.8 1287.4 312.0"/><path d="M1300.0 265.0 C1300.3 268.0 1300.3 277.3 1302.0 283.0 C1303.7 288.7 1307.7 293.5 1310.0 299.0 C1312.3 304.5 1315.0 313.2 1316.0 316.0"/><path d="M1334.0 273.0 C1333.3 276.0 1329.7 285.3 1330.0 291.0 C1330.3 296.7 1335.0 304.3 1336.0 307.0"/><path d="M1362.0 351.0 C1363.3 353.7 1367.3 362.0 1370.0 367.0 C1372.7 372.0 1377.3 379.0 1378.0 381.0 C1378.7 383.0 1374.7 379.3 1374.0 379.0"/><path d="M1296.0 387.0 C1295.0 389.7 1290.3 397.7 1290.0 403.0 C1289.7 408.3 1293.3 416.3 1294.0 419.0"/><path d="M1270.0 415.0 C1271.3 412.3 1276.0 405.7 1278.0 399.0 C1280.0 392.3 1281.3 379.0 1282.0 375.0"/><path d="M1350.0 415.0 C1351.3 417.0 1356.0 423.0 1358.0 427.0 C1360.0 431.0 1361.3 437.0 1362.0 439.0"/><path d="M1370.0 417.0 C1370.7 414.7 1371.7 406.7 1374.0 403.0 C1376.3 399.3 1380.7 397.3 1384.0 395.0 C1387.3 392.7 1392.3 390.0 1394.0 389.0"/><path d="M1310.0 463.0 C1311.0 465.7 1316.0 473.5 1316.0 479.0 C1316.0 484.5 1311.0 493.2 1310.0 496.0"/><path d="M1270.0 451.0 C1271.7 454.3 1275.7 465.3 1280.0 471.0 C1284.3 476.7 1293.3 482.7 1296.0 485.0"/><path d="M1374.0 467.0 C1373.3 469.3 1369.3 476.2 1370.0 481.0 C1370.7 485.8 1376.7 493.5 1378.0 496.0"/><path d="M1497.0 355.0 C1499.2 354.3 1505.8 352.7 1510.0 351.0 C1514.2 349.3 1520.0 346.0 1522.0 345.0"/><path d="M1350.0 503.0 C1350.7 505.7 1352.0 514.3 1354.0 519.0 C1356.0 523.7 1358.3 528.3 1362.0 531.0 C1365.7 533.7 1373.7 534.3 1376.0 535.0"/><path d="M1290.0 531.0 C1290.7 533.7 1291.7 540.3 1294.0 547.0 C1296.3 553.7 1302.3 567.0 1304.0 571.0"/><path d="M1330.0 504.0 C1330.7 506.5 1332.3 514.5 1334.0 519.0 C1335.7 523.5 1339.0 529.0 1340.0 531.0"/><path d="M1390.0 507.0 C1390.7 509.0 1392.0 515.3 1394.0 519.0 C1396.0 522.7 1400.7 527.3 1402.0 529.0"/><path d="M1318.0 589.0 C1317.7 592.0 1317.3 602.7 1316.0 607.0 C1314.7 611.3 1311.0 613.7 1310.0 615.0"/><path d="M1366.0 625.0 C1363.3 626.7 1354.7 633.3 1350.0 635.0 C1345.3 636.7 1340.0 635.0 1338.0 635.0"/><path d="M1420.0 531.0 L1430.0 531.0"/><path d="M1374.0 577.0 C1373.3 574.3 1369.7 568.0 1370.0 561.0 C1370.3 554.0 1375.0 539.3 1376.0 535.0"/><path d="M1070.0 377.0 C1070.7 380.0 1074.0 388.7 1074.0 395.0 C1074.0 401.3 1072.7 409.3 1070.0 415.0 C1067.3 420.7 1060.0 426.7 1058.0 429.0"/><path d="M1084.0 387.0 L1090.0 393.0"/><path d="M1100.0 383.0 C1101.7 380.0 1106.3 370.3 1110.0 365.0 C1113.7 359.7 1117.0 355.3 1122.0 351.0 C1127.0 346.7 1135.7 345.0 1140.0 339.0 C1144.3 333.0 1146.7 319.0 1148.0 315.0"/><path d="M1018.0 459.0 C1016.0 459.7 1010.7 460.7 1006.0 463.0 C1001.3 465.3 996.0 468.3 990.0 473.0 C984.0 477.7 973.3 488.0 970.0 491.0"/><path d="M1128.0 481.0 C1131.7 480.7 1143.3 480.0 1150.0 479.0 C1156.7 478.0 1165.0 475.7 1168.0 475.0"/><path d="M1168.0 475.0 C1171.0 474.3 1180.7 472.3 1186.0 471.0 C1191.3 469.7 1197.7 467.7 1200.0 467.0"/><path d="M1058.0 463.0 C1058.7 465.7 1060.0 473.5 1062.0 479.0 C1064.0 484.5 1068.7 493.2 1070.0 496.0"/><path d="M1092.0 451.0 C1093.3 453.7 1097.0 461.7 1100.0 467.0 C1103.0 472.3 1106.3 478.2 1110.0 483.0 C1113.7 487.8 1120.0 493.8 1122.0 496.0"/><path d="M934.0 427.0 C935.3 428.3 942.0 432.3 942.0 435.0 C942.0 437.7 935.3 441.7 934.0 443.0"/><path d="M994.0 195.0 C996.7 194.3 1004.7 192.7 1010.0 191.0 C1015.3 189.3 1021.3 187.7 1026.0 185.0 C1030.7 182.3 1034.7 179.0 1038.0 175.0 C1041.3 171.0 1044.7 163.3 1046.0 161.0"/><path d="M967.0 275.0 C969.5 274.7 976.8 273.0 982.0 273.0 C987.2 273.0 992.3 274.0 998.0 275.0 C1003.7 276.0 1010.7 276.3 1016.0 279.0 C1021.3 281.7 1027.7 289.0 1030.0 291.0"/><path d="M1016.0 299.0 C1015.7 297.0 1013.7 291.0 1014.0 287.0 C1014.3 283.0 1017.3 277.0 1018.0 275.0"/><path d="M1068.0 263.0 C1070.3 264.3 1078.3 267.0 1082.0 271.0 C1085.7 275.0 1086.7 282.3 1090.0 287.0 C1093.3 291.7 1097.3 299.0 1102.0 299.0 C1106.7 299.0 1115.3 289.0 1118.0 287.0"/><path d="M1170.0 233.0 C1170.7 235.3 1171.3 242.0 1174.0 247.0 C1176.7 252.0 1183.3 257.7 1186.0 263.0 C1188.7 268.3 1189.3 276.3 1190.0 279.0"/><path d="M1204.0 239.0 C1205.0 236.3 1207.3 227.0 1210.0 223.0 C1212.7 219.0 1216.7 220.0 1220.0 215.0 C1223.3 210.0 1228.3 196.7 1230.0 193.0"/><path d="M934.0 195.0 C936.0 195.7 941.7 199.0 946.0 199.0 C950.3 199.0 955.0 195.0 960.0 195.0 C965.0 195.0 971.0 199.0 976.0 199.0 C981.0 199.0 987.7 195.7 990.0 195.0"/><path d="M950.0 140.0 C950.3 143.2 952.3 153.2 952.0 159.0 C951.7 164.8 948.3 169.0 948.0 175.0 C947.7 181.0 949.7 191.7 950.0 195.0"/><path d="M934.0 171.0 L948.0 175.0"/><path d="M1010.0 140.0 C1010.7 142.5 1011.3 150.8 1014.0 155.0 C1016.7 159.2 1024.0 163.3 1026.0 165.0"/><path d="M1150.0 181.4 C1150.7 183.7 1154.0 190.1 1154.0 195.0 C1154.0 199.9 1149.3 204.0 1150.0 211.0 C1150.7 218.0 1156.7 232.7 1158.0 237.0"/></g>
<g fill="none" stroke="#e8829b" stroke-width="1.6" stroke-linejoin="round"><path d="M983.0 139.0 C983.3 141.7 983.8 149.0 985.0 155.0 C986.2 161.0 988.5 168.3 990.0 175.0 C991.5 181.7 993.3 189.3 994.0 195.0 C994.7 200.7 995.0 205.0 994.0 209.0 C993.0 213.0 989.5 215.7 988.0 219.0 C986.5 222.3 985.8 225.3 985.0 229.0 C984.2 232.7 985.5 236.0 983.0 241.0 C980.5 246.0 972.7 253.3 970.0 259.0 C967.3 264.7 966.5 269.7 967.0 275.0 C967.5 280.3 971.5 284.2 973.0 291.0 C974.5 297.8 975.5 311.8 976.0 316.0"/><path d="M934.0 150.0 C935.8 149.8 940.7 149.7 945.0 149.0 C949.3 148.3 954.8 147.2 960.0 146.0 C965.2 144.8 972.2 142.8 976.0 142.0 C979.8 141.2 980.7 141.4 983.0 141.0 C985.3 140.6 988.8 139.7 990.0 139.4"/><path d="M973.0 224.0 C973.8 224.1 976.3 224.3 978.0 224.4 C979.7 224.5 982.2 224.6 983.0 224.6"/><path d="M1140.0 139.0 C1139.8 140.3 1139.3 144.7 1139.0 147.0 C1138.7 149.3 1139.2 149.7 1138.0 153.0 C1136.8 156.3 1134.7 161.7 1132.0 167.0 C1129.3 172.3 1124.3 181.0 1122.0 185.0 C1119.7 189.0 1120.7 188.3 1118.0 191.0 C1115.3 193.7 1109.3 198.0 1106.0 201.0 C1102.7 204.0 1100.7 205.3 1098.0 209.0 C1095.3 212.7 1092.3 218.7 1090.0 223.0 C1087.7 227.3 1085.7 230.7 1084.0 235.0 C1082.3 239.3 1081.7 245.7 1080.0 249.0 C1078.3 252.3 1076.3 252.7 1074.0 255.0 C1071.7 257.3 1068.3 260.0 1066.0 263.0 C1063.7 266.0 1061.2 269.3 1060.0 273.0 C1058.8 276.7 1060.3 281.3 1059.0 285.0 C1057.7 288.7 1054.8 292.7 1052.0 295.0 C1049.2 297.3 1048.0 297.9 1042.0 298.6 C1036.0 299.3 1023.3 297.6 1016.0 299.0 C1008.7 300.4 1002.8 304.2 998.0 307.0 C993.2 309.8 988.8 314.5 987.0 316.0"/><path d="M1120.0 185.0 C1121.7 184.3 1125.0 181.6 1130.0 181.0 C1135.0 180.4 1143.3 181.9 1150.0 181.4 C1156.7 180.9 1163.3 178.7 1170.0 178.0 C1176.7 177.3 1184.0 176.3 1190.0 177.0 C1196.0 177.7 1201.0 181.2 1206.0 182.0 C1211.0 182.8 1215.3 182.3 1220.0 182.0 C1224.7 181.7 1228.3 180.8 1234.0 180.0 C1239.7 179.2 1250.7 177.8 1254.0 177.4"/><path d="M1100.0 139.0 C1101.0 142.0 1103.7 151.3 1106.0 157.0 C1108.3 162.7 1111.8 168.5 1114.0 173.0 C1116.2 177.5 1118.2 182.2 1119.0 184.0"/><path d="M1120.0 139.0 C1121.7 140.0 1127.0 142.7 1130.0 145.0 C1133.0 147.3 1136.7 151.7 1138.0 153.0"/><path d="M1138.0 153.0 C1139.0 152.0 1142.0 149.3 1144.0 147.0 C1146.0 144.7 1149.0 140.3 1150.0 139.0"/><path d="M1196.0 139.0 C1196.3 141.7 1197.8 148.8 1198.0 155.0 C1198.2 161.2 1197.2 172.5 1197.0 176.0"/><path d="M1192.0 141.0 C1195.0 141.7 1203.7 144.5 1210.0 145.0 C1216.3 145.5 1222.7 144.9 1230.0 144.0 C1237.3 143.1 1250.0 140.2 1254.0 139.4"/><path d="M1254.0 255.0 C1252.0 257.7 1245.3 265.7 1242.0 271.0 C1238.7 276.3 1236.3 282.0 1234.0 287.0 C1231.7 292.0 1230.5 296.2 1228.0 301.0 C1225.5 305.8 1220.5 313.5 1219.0 316.0"/><path d="M977.0 325.0 C978.5 327.0 983.2 333.0 986.0 337.0 C988.8 341.0 991.7 345.3 994.0 349.0 C996.3 352.7 997.7 356.0 1000.0 359.0 C1002.3 362.0 1006.0 363.7 1008.0 367.0 C1010.0 370.3 1011.0 375.7 1012.0 379.0 C1013.0 382.3 1013.7 385.7 1014.0 387.0"/><path d="M976.0 313.0 C976.1 314.0 976.2 317.0 976.4 319.0 C976.6 321.0 976.9 324.0 977.0 325.0"/><path d="M1014.0 387.0 C1015.0 389.0 1018.7 394.3 1020.0 399.0 C1021.3 403.7 1021.0 410.3 1022.0 415.0 C1023.0 419.7 1026.3 422.3 1026.0 427.0 C1025.7 431.7 1021.3 437.7 1020.0 443.0 C1018.7 448.3 1017.7 454.3 1018.0 459.0 C1018.3 463.7 1019.0 468.0 1022.0 471.0 C1025.0 474.0 1032.7 474.3 1036.0 477.0 C1039.3 479.7 1040.2 483.8 1042.0 487.0 C1043.8 490.2 1046.2 494.5 1047.0 496.0"/><path d="M1014.0 387.0 C1016.7 387.0 1024.7 388.0 1030.0 387.0 C1035.3 386.0 1040.7 383.3 1046.0 381.0 C1051.3 378.7 1058.0 373.7 1062.0 373.0 C1066.0 372.3 1066.3 374.7 1070.0 377.0 C1073.7 379.3 1079.0 386.0 1084.0 387.0 C1089.0 388.0 1094.7 383.0 1100.0 383.0 C1105.3 383.0 1111.0 387.0 1116.0 387.0 C1121.0 387.0 1126.0 383.3 1130.0 383.0 C1134.0 382.7 1136.3 386.5 1140.0 385.0 C1143.7 383.5 1148.0 375.0 1152.0 374.0 C1156.0 373.0 1161.3 376.8 1164.0 379.0 C1166.7 381.2 1167.3 385.7 1168.0 387.0"/><path d="M1220.0 313.0 C1218.3 315.3 1213.7 321.0 1210.0 327.0 C1206.3 333.0 1202.3 342.3 1198.0 349.0 C1193.7 355.7 1189.0 360.7 1184.0 367.0 C1179.0 373.3 1173.0 381.3 1168.0 387.0 C1163.0 392.7 1159.0 396.3 1154.0 401.0 C1149.0 405.7 1143.0 410.3 1138.0 415.0 C1133.0 419.7 1129.3 425.0 1124.0 429.0 C1118.7 433.0 1111.3 435.3 1106.0 439.0 C1100.7 442.7 1097.0 447.7 1092.0 451.0 C1087.0 454.3 1081.7 457.0 1076.0 459.0 C1070.3 461.0 1063.7 460.7 1058.0 463.0 C1052.3 465.3 1047.7 471.0 1042.0 473.0 C1036.3 475.0 1031.0 473.7 1024.0 475.0 C1017.0 476.3 1009.0 478.3 1000.0 481.0 C991.0 483.7 977.0 488.5 970.0 491.0 C963.0 493.5 960.0 495.2 958.0 496.0"/><path d="M1197.0 348.0 C1199.2 349.5 1205.2 355.0 1210.0 357.0 C1214.8 359.0 1220.0 359.5 1226.0 360.0 C1232.0 360.5 1241.3 360.0 1246.0 360.0 C1250.7 360.0 1252.7 360.0 1254.0 360.0"/><path d="M1121.0 442.0 C1120.5 444.2 1117.2 450.8 1118.0 455.0 C1118.8 459.2 1124.3 462.7 1126.0 467.0 C1127.7 471.3 1128.7 476.2 1128.0 481.0 C1127.3 485.8 1123.0 493.5 1122.0 496.0"/><path d="M1188.0 431.0 C1187.7 433.3 1188.7 440.3 1186.0 445.0 C1183.3 449.7 1175.0 454.0 1172.0 459.0 C1169.0 464.0 1168.8 468.8 1168.0 475.0 C1167.2 481.2 1167.2 492.5 1167.0 496.0"/><path d="M1046.0 494.0 C1046.7 495.2 1048.5 498.8 1050.0 501.0 C1051.5 503.2 1054.7 503.0 1055.0 507.0 C1055.3 511.0 1053.2 518.7 1052.0 525.0 C1050.8 531.3 1049.2 538.3 1048.0 545.0 C1046.8 551.7 1045.8 558.3 1045.0 565.0 C1044.2 571.7 1043.7 578.0 1043.0 585.0 C1042.3 592.0 1041.2 598.7 1041.0 607.0 C1040.8 615.3 1041.7 626.5 1042.0 635.0 C1042.3 643.5 1043.0 651.2 1043.0 658.0 C1043.0 664.8 1042.2 673.0 1042.0 676.0"/><path d="M934.0 615.0 C936.7 614.0 944.0 610.5 950.0 609.0 C956.0 607.5 961.5 606.7 970.0 606.0 C978.5 605.3 992.7 605.5 1001.0 605.0 C1009.3 604.5 1013.5 604.3 1020.0 603.0 C1026.5 601.7 1033.3 600.0 1040.0 597.0 C1046.7 594.0 1054.3 588.7 1060.0 585.0 C1065.7 581.3 1069.0 577.7 1074.0 575.0 C1079.0 572.3 1086.3 570.3 1090.0 569.0 C1093.7 567.7 1091.7 567.0 1096.0 567.0 C1100.3 567.0 1109.8 568.5 1116.0 569.0 C1122.2 569.5 1127.3 569.8 1133.0 570.0 C1138.7 570.2 1143.8 570.2 1150.0 570.0 C1156.2 569.8 1163.3 569.0 1170.0 569.0 C1176.7 569.0 1183.3 568.7 1190.0 570.0 C1196.7 571.3 1205.0 575.2 1210.0 577.0 C1215.0 578.8 1216.3 578.7 1220.0 581.0 C1223.7 583.3 1230.0 587.8 1232.0 591.0 C1234.0 594.2 1232.0 598.5 1232.0 600.0"/><path d="M1043.0 658.0 C1044.8 656.2 1050.2 650.2 1054.0 647.0 C1057.8 643.8 1063.7 642.7 1066.0 639.0 C1068.3 635.3 1066.5 629.5 1068.0 625.0 C1069.5 620.5 1071.3 616.3 1075.0 612.0 C1078.7 607.7 1085.5 602.2 1090.0 599.0 C1094.5 595.8 1097.7 595.7 1102.0 593.0 C1106.3 590.3 1111.3 586.0 1116.0 583.0 C1120.7 580.0 1127.2 577.2 1130.0 575.0 C1132.8 572.8 1132.5 570.8 1133.0 570.0"/><path d="M1210.0 577.0 C1212.7 575.0 1221.0 570.3 1226.0 565.0 C1231.0 559.7 1235.3 549.2 1240.0 545.0 C1244.7 540.8 1251.7 540.8 1254.0 540.0"/><path d="M1095.0 566.0 C1093.5 563.5 1089.2 555.8 1086.0 551.0 C1082.8 546.2 1079.0 540.7 1076.0 537.0 C1073.0 533.3 1071.0 531.3 1068.0 529.0 C1065.0 526.7 1060.7 523.7 1058.0 523.0 C1055.3 522.3 1053.0 524.7 1052.0 525.0"/><path d="M1168.0 515.0 C1166.7 516.3 1163.0 519.7 1160.0 523.0 C1157.0 526.3 1152.3 530.7 1150.0 535.0 C1147.7 539.3 1147.7 544.7 1146.0 549.0 C1144.3 553.3 1142.2 557.5 1140.0 561.0 C1137.8 564.5 1134.2 568.5 1133.0 570.0"/><path d="M1130.0 575.0 C1130.2 577.7 1130.7 585.5 1131.0 591.0 C1131.3 596.5 1131.1 602.3 1131.6 608.0 C1132.1 613.7 1132.9 618.8 1134.0 625.0 C1135.1 631.2 1137.0 638.3 1138.0 645.0 C1139.0 651.7 1140.0 659.8 1140.0 665.0 C1140.0 670.2 1138.3 674.2 1138.0 676.0"/><path d="M1133.0 570.0 C1131.2 567.5 1124.2 560.8 1122.0 555.0 C1119.8 549.2 1119.0 541.7 1120.0 535.0 C1121.0 528.3 1127.7 520.0 1128.0 515.0 C1128.3 510.0 1123.3 508.5 1122.0 505.0 C1120.7 501.5 1120.3 495.8 1120.0 494.0"/><path d="M972.0 554.0 C975.0 554.5 983.0 555.8 990.0 557.0 C997.0 558.2 1006.7 560.3 1014.0 561.0 C1021.3 561.7 1028.0 560.5 1034.0 561.0 C1040.0 561.5 1044.0 563.3 1050.0 564.0 C1056.0 564.7 1062.3 564.5 1070.0 565.0 C1077.7 565.5 1091.7 566.7 1096.0 567.0"/><path d="M972.0 554.0 C973.0 556.5 975.7 563.8 978.0 569.0 C980.3 574.2 982.2 579.0 986.0 585.0 C989.8 591.0 997.0 598.7 1001.0 605.0 C1005.0 611.3 1008.2 617.3 1010.0 623.0 C1011.8 628.7 1011.3 633.8 1012.0 639.0 C1012.7 644.2 1013.7 651.5 1014.0 654.0"/><path d="M1043.0 658.0 C1040.8 657.5 1034.8 655.7 1030.0 655.0 C1025.2 654.3 1019.0 653.3 1014.0 654.0 C1009.0 654.7 1005.7 656.5 1000.0 659.0 C994.3 661.5 985.3 666.2 980.0 669.0 C974.7 671.8 970.0 674.8 968.0 676.0"/><path d="M934.0 653.0 C936.7 652.7 944.0 651.7 950.0 651.0 C956.0 650.3 964.7 649.2 970.0 649.0 C975.3 648.8 980.0 649.8 982.0 650.0"/><path d="M1232.0 600.0 C1229.0 601.8 1220.0 607.2 1214.0 611.0 C1208.0 614.8 1200.7 619.5 1196.0 623.0 C1191.3 626.5 1189.3 628.0 1186.0 632.0 C1182.7 636.0 1178.7 642.2 1176.0 647.0 C1173.3 651.8 1172.7 656.2 1170.0 661.0 C1167.3 665.8 1161.7 673.5 1160.0 676.0"/><path d="M934.0 510.0 C936.0 508.8 942.3 505.7 946.0 503.0 C949.7 500.3 954.3 495.5 956.0 494.0"/><path d="M1096.0 567.0 C1096.0 570.0 1096.2 579.7 1096.0 585.0 C1095.8 590.3 1096.0 596.5 1095.0 599.0 C1094.0 601.5 1090.8 599.8 1090.0 600.0"/><path d="M1232.0 600.0 C1233.7 601.2 1238.3 604.5 1242.0 607.0 C1245.7 609.5 1252.0 613.7 1254.0 615.0"/><path d="M1232.0 600.0 C1233.7 599.3 1238.3 596.9 1242.0 596.0 C1245.7 595.1 1252.0 594.7 1254.0 594.4"/><path d="M1168.0 515.0 C1167.3 513.7 1164.0 510.5 1164.0 507.0 C1164.0 503.5 1167.3 496.2 1168.0 494.0"/><path d="M1042.0 675.0 C1040.7 677.5 1036.3 685.5 1034.0 690.0 C1031.7 694.5 1029.3 698.0 1028.0 702.0 C1026.7 706.0 1026.3 712.0 1026.0 714.0"/><path d="M1050.0 670.0 C1051.7 671.3 1056.8 675.8 1060.0 678.0 C1063.2 680.2 1067.5 682.5 1069.0 683.4"/><path d="M1138.0 675.0 C1137.3 677.5 1132.0 685.8 1134.0 690.0 C1136.0 694.2 1145.3 697.0 1150.0 700.0 C1154.7 703.0 1157.7 705.7 1162.0 708.0 C1166.3 710.3 1173.7 713.0 1176.0 714.0"/><path d="M1211.4 676.0 C1210.2 678.3 1205.6 683.7 1204.0 690.0 C1202.4 696.3 1202.3 710.0 1202.0 714.0"/><path d="M1211.4 676.0 C1212.5 675.0 1215.6 672.7 1218.0 670.0 C1220.4 667.3 1224.7 661.7 1226.0 660.0"/><path d="M1336.0 316.0 C1337.7 312.5 1343.0 300.5 1346.0 295.0 C1349.0 289.5 1351.3 286.7 1354.0 283.0 C1356.7 279.3 1359.3 276.0 1362.0 273.0 C1364.7 270.0 1367.0 269.0 1370.0 265.0 C1373.0 261.0 1376.7 254.0 1380.0 249.0 C1383.3 244.0 1386.3 239.3 1390.0 235.0 C1393.7 230.7 1398.7 225.7 1402.0 223.0 C1405.3 220.3 1407.0 221.3 1410.0 219.0 C1413.0 216.7 1415.7 212.3 1420.0 209.0 C1424.3 205.7 1430.3 202.7 1436.0 199.0 C1441.7 195.3 1448.3 189.8 1454.0 187.0 C1459.7 184.2 1464.7 183.3 1470.0 182.0 C1475.3 180.7 1481.7 180.7 1486.0 179.0 C1490.3 177.3 1492.3 174.3 1496.0 172.0 C1499.7 169.7 1504.0 167.8 1508.0 165.0 C1512.0 162.2 1516.3 157.7 1520.0 155.0 C1523.7 152.3 1526.7 151.7 1530.0 149.0 C1533.3 146.3 1538.3 140.7 1540.0 139.0"/><path d="M1358.0 263.0 C1357.3 261.3 1356.0 257.7 1354.0 253.0 C1352.0 248.3 1348.7 241.3 1346.0 235.0 C1343.3 228.7 1339.5 219.5 1338.0 215.0 C1336.5 210.5 1339.0 210.7 1337.0 208.0 C1335.0 205.3 1330.5 203.0 1326.0 199.0 C1321.5 195.0 1316.0 187.7 1310.0 184.0 C1304.0 180.3 1296.7 178.5 1290.0 177.0 C1283.3 175.5 1277.0 174.9 1270.0 175.0 C1263.0 175.1 1251.7 177.0 1248.0 177.4"/><path d="M1337.0 208.0 C1339.8 208.8 1347.8 211.2 1354.0 213.0 C1360.2 214.8 1368.0 217.7 1374.0 219.0 C1380.0 220.3 1385.3 220.5 1390.0 221.0 C1394.7 221.5 1400.0 221.8 1402.0 222.0"/><path d="M1248.0 257.0 C1250.3 254.7 1258.0 247.0 1262.0 243.0 C1266.0 239.0 1269.0 237.0 1272.0 233.0 C1275.0 229.0 1277.0 223.7 1280.0 219.0 C1283.0 214.3 1286.7 209.3 1290.0 205.0 C1293.3 200.7 1296.7 196.5 1300.0 193.0 C1303.3 189.5 1307.7 188.3 1310.0 184.0 C1312.3 179.7 1313.0 172.5 1314.0 167.0 C1315.0 161.5 1316.7 155.7 1316.0 151.0 C1315.3 146.3 1311.0 141.0 1310.0 139.0"/><path d="M1368.0 267.0 C1364.3 268.3 1352.3 273.7 1346.0 275.0 C1339.7 276.3 1336.0 275.3 1330.0 275.0 C1324.0 274.7 1316.0 275.0 1310.0 273.0 C1304.0 271.0 1300.0 266.0 1294.0 263.0 C1288.0 260.0 1280.0 256.7 1274.0 255.0 C1268.0 253.3 1262.3 253.0 1258.0 253.0 C1253.7 253.0 1249.7 254.7 1248.0 255.0"/><path d="M1396.0 148.0 C1396.3 150.8 1397.3 158.8 1398.0 165.0 C1398.7 171.2 1399.3 179.0 1400.0 185.0 C1400.7 191.0 1401.3 196.7 1402.0 201.0 C1402.7 205.3 1403.7 207.7 1404.0 211.0 C1404.3 214.3 1404.0 219.3 1404.0 221.0"/><path d="M1316.0 151.0 C1320.0 150.3 1332.3 148.0 1340.0 147.0 C1347.7 146.0 1352.7 144.8 1362.0 145.0 C1371.3 145.2 1388.0 148.8 1396.0 148.0 C1404.0 147.2 1407.7 141.3 1410.0 140.0"/><path d="M1370.0 265.0 C1373.3 264.0 1382.5 260.4 1390.0 259.0 C1397.5 257.6 1408.3 257.3 1415.0 256.6 C1421.7 255.9 1425.5 255.1 1430.0 255.0 C1434.5 254.9 1440.0 255.8 1442.0 256.0"/><path d="M1488.0 181.0 C1491.7 179.3 1503.0 174.3 1510.0 171.0 C1517.0 167.7 1523.3 165.0 1530.0 161.0 C1536.7 157.0 1545.3 150.7 1550.0 147.0 C1554.7 143.3 1556.7 140.3 1558.0 139.0"/><path d="M1530.0 151.0 C1532.7 154.3 1540.7 165.0 1546.0 171.0 C1551.3 177.0 1557.3 183.0 1562.0 187.0 C1566.7 191.0 1572.0 193.7 1574.0 195.0"/><path d="M1488.0 181.0 C1487.8 183.3 1486.7 189.3 1487.0 195.0 C1487.3 200.7 1488.2 208.2 1490.0 215.0 C1491.8 221.8 1496.7 232.5 1498.0 236.0"/><path d="M1390.0 235.0 C1388.7 235.7 1385.3 237.0 1382.0 239.0 C1378.7 241.0 1373.3 244.3 1370.0 247.0 C1366.7 249.7 1364.0 252.3 1362.0 255.0 C1360.0 257.7 1358.7 261.7 1358.0 263.0"/><path d="M1402.0 223.0 C1403.0 225.0 1406.0 231.0 1408.0 235.0 C1410.0 239.0 1412.8 243.4 1414.0 247.0 C1415.2 250.6 1414.8 255.0 1415.0 256.6"/><path d="M1250.0 147.0 C1253.3 146.3 1263.3 144.0 1270.0 143.0 C1276.7 142.0 1282.3 139.7 1290.0 141.0 C1297.7 142.3 1311.7 149.3 1316.0 151.0"/><path d="M1530.0 149.0 C1529.3 147.7 1528.0 142.7 1526.0 141.0 C1524.0 139.3 1519.3 139.3 1518.0 139.0"/><path d="M1530.0 149.0 C1533.3 148.0 1544.7 144.7 1550.0 143.0 C1555.3 141.3 1560.0 139.7 1562.0 139.0"/><path d="M1362.0 316.0 C1363.3 313.2 1367.3 304.5 1370.0 299.0 C1372.7 293.5 1376.3 287.0 1378.0 283.0 C1379.7 279.0 1379.7 276.3 1380.0 275.0"/><path d="M1528.6 149.0 C1526.5 150.7 1520.4 156.0 1516.0 159.0 C1511.6 162.0 1505.2 164.9 1502.0 167.0 C1498.8 169.1 1497.5 170.8 1496.6 171.6"/><path d="M1380.0 267.4 C1379.7 268.2 1379.4 270.8 1378.4 272.2 C1377.5 273.6 1375.9 274.9 1374.2 275.7 C1372.5 276.5 1370.3 277.0 1368.4 277.0 C1366.5 277.0 1364.3 276.5 1362.6 275.7 C1360.9 274.9 1359.3 273.6 1358.4 272.2 C1357.4 270.8 1356.8 269.0 1356.8 267.4 C1356.8 265.8 1357.4 264.0 1358.4 262.6 C1359.3 261.2 1360.9 259.9 1362.6 259.1 C1364.3 258.3 1366.5 257.8 1368.4 257.8 C1370.3 257.8 1372.5 258.3 1374.2 259.1 C1375.9 259.9 1377.5 261.2 1378.4 262.6 C1379.4 264.0 1379.7 266.6 1380.0 267.4"/><path d="M1411.4 223.0 C1411.2 223.7 1411.0 225.8 1410.3 227.0 C1409.6 228.2 1408.4 229.3 1407.2 229.9 C1406.0 230.6 1404.4 231.0 1403.0 231.0 C1401.6 231.0 1400.0 230.6 1398.8 229.9 C1397.6 229.3 1396.4 228.2 1395.7 227.0 C1395.0 225.8 1394.6 224.3 1394.6 223.0 C1394.6 221.7 1395.0 220.2 1395.7 219.0 C1396.4 217.8 1397.6 216.7 1398.8 216.1 C1400.0 215.4 1401.6 215.0 1403.0 215.0 C1404.4 215.0 1406.0 215.4 1407.2 216.1 C1408.4 216.7 1409.6 217.8 1410.3 219.0 C1411.0 220.2 1411.2 222.3 1411.4 223.0"/><path d="M1537.6 150.0 C1537.4 150.7 1537.1 152.8 1536.4 154.0 C1535.6 155.2 1534.4 156.3 1533.1 156.9 C1531.8 157.6 1530.1 158.0 1528.6 158.0 C1527.1 158.0 1525.4 157.6 1524.1 156.9 C1522.8 156.3 1521.6 155.2 1520.8 154.0 C1520.1 152.8 1519.6 151.3 1519.6 150.0 C1519.6 148.7 1520.1 147.2 1520.8 146.0 C1521.6 144.8 1522.8 143.7 1524.1 143.1 C1525.4 142.4 1527.1 142.0 1528.6 142.0 C1530.1 142.0 1531.8 142.4 1533.1 143.1 C1534.4 143.7 1535.6 144.8 1536.4 146.0 C1537.1 147.2 1537.4 149.3 1537.6 150.0"/><path d="M1329.0 313.0 C1329.2 315.8 1329.8 324.7 1330.0 330.0 C1330.2 335.3 1329.7 339.2 1330.0 345.0 C1330.3 350.8 1331.3 358.3 1332.0 365.0 C1332.7 371.7 1333.7 378.7 1334.0 385.0 C1334.3 391.3 1333.7 398.3 1334.0 403.0 C1334.3 407.7 1335.3 409.0 1336.0 413.0 C1336.7 417.0 1337.7 421.5 1338.0 427.0 C1338.3 432.5 1337.5 440.0 1338.0 446.0 C1338.5 452.0 1341.3 457.5 1341.0 463.0 C1340.7 468.5 1337.7 473.5 1336.0 479.0 C1334.3 484.5 1331.8 493.2 1331.0 496.0"/><path d="M1248.0 360.6 C1251.0 361.3 1260.3 362.6 1266.0 365.0 C1271.7 367.4 1277.0 371.3 1282.0 375.0 C1287.0 378.7 1291.3 383.3 1296.0 387.0 C1300.7 390.7 1305.7 394.3 1310.0 397.0 C1314.3 399.7 1318.0 400.7 1322.0 403.0 C1326.0 405.3 1329.3 409.0 1334.0 411.0 C1338.7 413.0 1344.0 414.0 1350.0 415.0 C1356.0 416.0 1364.7 415.7 1370.0 417.0 C1375.3 418.3 1378.3 420.3 1382.0 423.0 C1385.7 425.7 1389.0 430.0 1392.0 433.0 C1395.0 436.0 1397.3 438.0 1400.0 441.0 C1402.7 444.0 1405.3 447.3 1408.0 451.0 C1410.7 454.7 1413.7 459.3 1416.0 463.0 C1418.3 466.7 1419.7 470.0 1422.0 473.0 C1424.3 476.0 1427.0 479.0 1430.0 481.0 C1433.0 483.0 1435.3 484.0 1440.0 485.0 C1444.7 486.0 1455.0 486.7 1458.0 487.0"/><path d="M1338.0 446.0 C1336.3 448.2 1332.0 454.8 1328.0 459.0 C1324.0 463.2 1319.3 466.7 1314.0 471.0 C1308.7 475.3 1300.5 481.0 1296.0 485.0 C1291.5 489.0 1288.5 493.3 1287.0 495.0"/><path d="M1347.4 414.0 C1347.1 415.0 1346.8 418.3 1345.7 420.0 C1344.7 421.7 1343.0 423.4 1341.2 424.4 C1339.4 425.4 1337.1 426.0 1335.0 426.0 C1332.9 426.0 1330.6 425.4 1328.8 424.4 C1327.0 423.4 1325.3 421.7 1324.3 420.0 C1323.2 418.3 1322.6 416.0 1322.6 414.0 C1322.6 412.0 1323.2 409.7 1324.3 408.0 C1325.3 406.3 1327.0 404.6 1328.8 403.6 C1330.6 402.6 1332.9 402.0 1335.0 402.0 C1337.1 402.0 1339.4 402.6 1341.2 403.6 C1343.0 404.6 1344.7 406.3 1345.7 408.0 C1346.8 409.7 1347.1 413.0 1347.4 414.0"/><path d="M1492.0 323.0 C1495.0 322.8 1504.3 322.0 1510.0 322.0 C1515.7 322.0 1521.7 322.3 1526.0 323.0 C1530.3 323.7 1534.3 325.5 1536.0 326.0"/><path d="M1392.0 433.0 C1392.3 434.7 1392.3 440.8 1393.6 443.0 C1394.9 445.2 1397.6 444.7 1400.0 446.0 C1402.4 447.3 1406.7 450.2 1408.0 451.0"/><path d="M1420.6 473.6 C1421.5 474.8 1423.4 479.1 1426.0 481.0 C1428.6 482.9 1434.3 484.3 1436.0 485.0"/><path d="M1430.0 481.0 C1431.3 480.0 1435.0 475.3 1438.0 475.0 C1441.0 474.7 1444.7 477.0 1448.0 479.0 C1451.3 481.0 1456.3 485.7 1458.0 487.0"/><path d="M1436.0 485.0 L1438.0 496.0"/><path d="M1338.0 446.0 C1339.3 445.5 1344.3 444.8 1346.0 443.0 C1347.7 441.2 1348.3 438.3 1348.0 435.0 C1347.7 431.7 1344.7 425.0 1344.0 423.0"/><path d="M1329.0 493.0 C1328.2 495.3 1326.2 501.2 1324.0 507.0 C1321.8 512.8 1318.3 521.3 1316.0 528.0 C1313.7 534.7 1312.0 539.8 1310.0 547.0 C1308.0 554.2 1305.0 565.0 1304.0 571.0 C1303.0 577.0 1305.7 578.3 1304.0 583.0 C1302.3 587.7 1297.0 593.7 1294.0 599.0 C1291.0 604.3 1289.3 609.7 1286.0 615.0 C1282.7 620.3 1278.0 625.7 1274.0 631.0 C1270.0 636.3 1266.3 642.0 1262.0 647.0 C1257.7 652.0 1250.3 658.7 1248.0 661.0"/><path d="M1248.0 595.0 C1251.7 594.0 1263.0 591.0 1270.0 589.0 C1277.0 587.0 1284.3 584.0 1290.0 583.0 C1295.7 582.0 1299.3 582.0 1304.0 583.0 C1308.7 584.0 1312.0 587.2 1318.0 589.0 C1324.0 590.8 1332.0 593.0 1340.0 594.0 C1348.0 595.0 1361.7 594.8 1366.0 595.0"/><path d="M1366.0 595.0 C1366.7 594.0 1368.7 592.0 1370.0 589.0 C1371.3 586.0 1371.3 579.3 1374.0 577.0 C1376.7 574.7 1382.0 576.0 1386.0 575.0 C1390.0 574.0 1394.0 572.7 1398.0 571.0 C1402.0 569.3 1406.0 567.3 1410.0 565.0 C1414.0 562.7 1418.7 559.7 1422.0 557.0 C1425.3 554.3 1427.3 551.0 1430.0 549.0 C1432.7 547.0 1436.7 545.7 1438.0 545.0"/><path d="M1366.0 595.0 C1370.0 594.7 1383.3 594.0 1390.0 593.0 C1396.7 592.0 1401.0 589.7 1406.0 589.0 C1411.0 588.3 1415.3 589.5 1420.0 589.0 C1424.7 588.5 1431.7 586.5 1434.0 586.0"/><path d="M1232.0 600.0 C1235.0 600.7 1243.7 602.8 1250.0 604.0 C1256.3 605.2 1263.3 605.8 1270.0 607.0 C1276.7 608.2 1283.3 609.7 1290.0 611.0 C1296.7 612.3 1304.0 614.3 1310.0 615.0 C1316.0 615.7 1321.0 614.7 1326.0 615.0 C1331.0 615.3 1337.7 616.7 1340.0 617.0"/><path d="M1408.0 499.0 C1405.0 500.3 1396.3 506.0 1390.0 507.0 C1383.7 508.0 1376.7 505.7 1370.0 505.0 C1363.3 504.3 1356.7 503.2 1350.0 503.0 C1343.3 502.8 1336.7 504.7 1330.0 504.0 C1323.3 503.3 1315.0 500.8 1310.0 499.0 C1305.0 497.2 1301.7 494.0 1300.0 493.0"/><path d="M1300.0 647.0 C1303.7 648.2 1315.3 652.1 1322.0 654.4 C1328.7 656.7 1334.7 658.9 1340.0 661.0 C1345.3 663.1 1349.3 665.4 1354.0 667.0 C1358.7 668.6 1365.7 670.0 1368.0 670.6"/><path d="M1248.0 615.0 C1250.3 617.3 1258.3 624.3 1262.0 629.0 C1265.7 633.7 1267.0 638.0 1270.0 643.0 C1273.0 648.0 1277.0 653.5 1280.0 659.0 C1283.0 664.5 1286.7 673.2 1288.0 676.0"/><path d="M1438.0 545.0 C1436.7 542.7 1432.0 536.0 1430.0 531.0 C1428.0 526.0 1427.0 520.0 1426.0 515.0 C1425.0 510.0 1424.0 504.7 1424.0 501.0 C1424.0 497.3 1425.7 494.3 1426.0 493.0"/><path d="M1408.0 499.0 C1410.3 498.7 1417.0 497.8 1422.0 497.0 C1427.0 496.2 1435.3 494.5 1438.0 494.0"/><path d="M1248.0 539.0 C1249.7 536.7 1254.0 530.3 1258.0 525.0 C1262.0 519.7 1267.2 512.0 1272.0 507.0 C1276.8 502.0 1284.5 497.0 1287.0 495.0"/><path d="M1248.0 643.0 C1250.3 641.7 1257.7 637.0 1262.0 635.0 C1266.3 633.0 1272.0 631.7 1274.0 631.0"/><path d="M1275.5 685.3 C1277.3 688.1 1283.3 696.4 1286.1 702.3 C1289.0 708.1 1291.4 717.3 1292.5 720.3"/><path d="M1520.0 155.0 C1521.7 157.7 1526.6 163.4 1530.0 171.0 C1533.4 178.6 1538.8 195.5 1540.6 200.4"/></g>
<g fill="#fff" stroke="#6e6e6e" stroke-width="1.1"><circle cx="945.0" cy="149.4" r="1.7"/><circle cx="1119.0" cy="184.4" r="1.7"/><circle cx="1221.4" cy="182.0" r="1.7"/><circle cx="1086.6" cy="223.0" r="1.7"/><circle cx="982.4" cy="224.6" r="1.7"/><circle cx="936.0" cy="217.0" r="1.7"/><circle cx="1128.6" cy="262.0" r="1.7"/><circle cx="1212.4" cy="313.4" r="1.7"/><circle cx="977.0" cy="325.0" r="1.7"/><circle cx="1014.2" cy="386.6" r="1.7"/><circle cx="1195.6" cy="346.6" r="1.7"/><circle cx="1246.0" cy="360.0" r="1.7"/><circle cx="1189.0" cy="426.4" r="1.7"/><circle cx="1011.4" cy="441.4" r="1.7"/><circle cx="1121.0" cy="441.4" r="1.7"/><circle cx="1081.0" cy="446.0" r="1.7"/><circle cx="1168.0" cy="514.6" r="1.7"/><circle cx="972.0" cy="554.0" r="1.7"/><circle cx="1095.0" cy="566.0" r="1.7"/><circle cx="1133.2" cy="569.4" r="1.7"/><circle cx="1209.6" cy="577.4" r="1.7"/><circle cx="1232.0" cy="600.0" r="2.6"/><circle cx="1115.6" cy="582.2" r="1.7"/><circle cx="1001.0" cy="604.6" r="1.7"/><circle cx="1075.4" cy="611.4" r="1.7"/><circle cx="1131.6" cy="608.0" r="1.7"/><circle cx="1186.0" cy="632.0" r="1.7"/><circle cx="1066.0" cy="639.4" r="1.7"/><circle cx="1014.4" cy="654.4" r="1.7"/><circle cx="1043.4" cy="658.4" r="2.6"/><circle cx="1028.0" cy="690.0" r="1.7"/><circle cx="1069.0" cy="683.4" r="1.7"/><circle cx="1211.4" cy="676.0" r="1.7"/><circle cx="1315.6" cy="150.6" r="1.7"/><circle cx="1395.4" cy="148.2" r="1.7"/><circle cx="1528.6" cy="149.0" r="2.6"/><circle cx="1310.6" cy="183.4" r="1.7"/><circle cx="1372.6" cy="191.0" r="1.7"/><circle cx="1496.6" cy="171.6" r="1.7"/><circle cx="1336.8" cy="208.2" r="1.7"/><circle cx="1405.6" cy="209.8" r="1.7"/><circle cx="1290.0" cy="204.0" r="1.7"/><circle cx="1540.6" cy="200.4" r="1.7"/><circle cx="1384.0" cy="230.6" r="1.7"/><circle cx="1324.0" cy="241.8" r="1.7"/><circle cx="1498.4" cy="237.0" r="1.7"/><circle cx="1358.6" cy="245.4" r="1.7"/><circle cx="1414.8" cy="256.6" r="1.7"/><circle cx="1450.6" cy="279.0" r="1.7"/><circle cx="1368.8" cy="266.2" r="2.6"/><circle cx="1379.4" cy="295.0" r="1.7"/><circle cx="1287.4" cy="312.0" r="1.7"/><circle cx="1492.0" cy="323.4" r="1.7"/><circle cx="1536.0" cy="327.0" r="1.7"/><circle cx="1332.0" cy="330.0" r="1.7"/><circle cx="1335.4" cy="413.4" r="2.6"/><circle cx="1338.0" cy="446.4" r="1.7"/><circle cx="1420.6" cy="473.6" r="1.7"/><circle cx="1459.0" cy="486.4" r="2.6"/><circle cx="1407.6" cy="499.4" r="1.7"/><circle cx="1315.4" cy="528.4" r="1.7"/><circle cx="1438.4" cy="545.6" r="1.7"/><circle cx="1304.0" cy="583.0" r="1.7"/><circle cx="1340.0" cy="617.4" r="1.7"/><circle cx="1322.0" cy="654.4" r="1.7"/><circle cx="1367.9" cy="670.0" r="1.7"/></g>
<g stroke="#fff" stroke-opacity="0.75" stroke-width="2" stroke-linejoin="round" paint-order="stroke">
<text x="966.0" y="160.8" font-size="10.5" fill="#383838" font-style="normal" letter-spacing="-0.15" text-anchor="end">Zanesville</text>
<text x="1054.0" y="147.8" font-size="10.5" fill="#383838" font-style="normal" letter-spacing="-0.15" text-anchor="middle">Wheeling</text>
<text x="1117.0" y="181.4" font-size="10.5" fill="#383838" font-style="normal" letter-spacing="-0.15" text-anchor="middle">Morgantown</text>
<text x="1221.0" y="178.8" font-size="10.5" fill="#383838" font-style="normal" letter-spacing="-0.15" text-anchor="middle">Cumberland</text>
<text x="1086.4" y="220.2" font-size="10.5" fill="#383838" font-style="normal" letter-spacing="-0.15" text-anchor="middle">Clarksburg</text>
<text x="986.4" y="229.2" font-size="10.5" fill="#383838" font-style="normal" letter-spacing="-0.15" text-anchor="start">Parkersburg</text>
<text x="951.6" y="229.2" font-size="10.5" fill="#383838" font-style="normal" letter-spacing="-0.15" text-anchor="end">Athens</text>
<text x="1129.0" y="273.2" font-size="10.5" fill="#383838" font-style="normal" letter-spacing="-0.15" text-anchor="middle">Elkins</text>
<text x="1046.4" y="303.4" font-size="11" fill="#8d6a8f" font-style="italic" letter-spacing="-0.2" text-anchor="middle">West Virginia</text>
<text x="1212.0" y="311.2" font-size="10.5" fill="#383838" font-style="normal" letter-spacing="-0.15" text-anchor="middle">Harrisonburg</text>
<text x="976.4" y="322.4" font-size="10.5" fill="#383838" font-style="normal" letter-spacing="-0.15" text-anchor="middle">Charleston</text>
<text x="1014.4" y="384.4" font-size="10.5" fill="#383838" font-style="normal" letter-spacing="-0.15" text-anchor="middle">Beckley</text>
<text x="1171.0" y="351.4" font-size="10.5" fill="#383838" font-style="normal" letter-spacing="-0.15" text-anchor="middle">Staunton</text>
<text x="1214.4" y="356.8" font-size="10.5" fill="#383838" font-style="normal" letter-spacing="-0.15" text-anchor="start">Charlottesville</text>
<text x="1236.0" y="411.0" font-size="11" fill="#8d6a8f" font-style="italic" letter-spacing="-0.2" text-anchor="start">Virginia</text>
<text x="1189.0" y="423.8" font-size="10.5" fill="#383838" font-style="normal" letter-spacing="-0.15" text-anchor="middle">Lynchburg</text>
<text x="1011.4" y="439.0" font-size="10.5" fill="#383838" font-style="normal" letter-spacing="-0.15" text-anchor="middle">Bluefield</text>
<text x="1121.0" y="439.0" font-size="10.5" fill="#383838" font-style="normal" letter-spacing="-0.15" text-anchor="middle">Roanoke</text>
<text x="1080.6" y="457.8" font-size="10.5" fill="#383838" font-style="normal" letter-spacing="-0.15" text-anchor="middle">Blacksburg</text>
<text x="1168.0" y="511.8" font-size="10.5" fill="#383838" font-style="normal" letter-spacing="-0.15" text-anchor="middle">Danville</text>
<text x="972.0" y="564.8" font-size="10.5" fill="#383838" font-style="normal" letter-spacing="-0.15" text-anchor="middle">Boone</text>
<text x="1071.0" y="565.2" font-size="10.5" fill="#383838" font-style="normal" letter-spacing="-0.15" text-anchor="middle">Winston-</text>
<text x="1077.6" y="576.2" font-size="10.5" fill="#383838" font-style="normal" letter-spacing="-0.15" text-anchor="middle">Salem</text>
<text x="1133.6" y="566.4" font-size="10.5" fill="#383838" font-style="normal" letter-spacing="-0.15" text-anchor="middle">Greensboro</text>
<text x="1209.6" y="574.4" font-size="10.5" fill="#383838" font-style="normal" letter-spacing="-0.15" text-anchor="middle">Durham</text>
<text x="1212.4" y="596.5" font-size="12.6" fill="#2c2c2c" font-style="normal" letter-spacing="-0.15" text-anchor="start">Raleigh</text>
<text x="1115.4" y="593.2" font-size="10.5" fill="#383838" font-style="normal" letter-spacing="-0.15" text-anchor="middle">High Point</text>
<text x="1001.0" y="602.2" font-size="10.5" fill="#383838" font-style="normal" letter-spacing="-0.15" text-anchor="middle">Hickory</text>
<text x="1075.4" y="608.8" font-size="10.5" fill="#383838" font-style="normal" letter-spacing="-0.15" text-anchor="middle">Salisbury</text>
<text x="1131.6" y="619.4" font-size="10.5" fill="#383838" font-style="normal" letter-spacing="-0.15" text-anchor="middle">Asheboro</text>
<text x="1185.6" y="628.8" font-size="10.5" fill="#383838" font-style="normal" letter-spacing="-0.15" text-anchor="middle">Sanford</text>
<text x="1066.0" y="636.2" font-size="10.5" fill="#383838" font-style="normal" letter-spacing="-0.15" text-anchor="middle">Concord</text>
<text x="1218.0" y="644.0" font-size="11" fill="#8d6a8f" font-style="italic" letter-spacing="-0.2" text-anchor="start">North Carolina</text>
<text x="1014.4" y="651.8" font-size="10.5" fill="#383838" font-style="normal" letter-spacing="-0.15" text-anchor="middle">Gastonia</text>
<text x="1043.6" y="672.1" font-size="12.6" fill="#2c2c2c" font-style="normal" letter-spacing="-0.15" text-anchor="middle">Charlotte</text>
<text x="1211.6" y="673.4" font-size="10.5" fill="#383838" font-style="normal" letter-spacing="-0.15" text-anchor="middle">Fayetteville</text>
<text x="1028.0" y="686.8" font-size="10.5" fill="#383838" font-style="normal" letter-spacing="-0.15" text-anchor="middle">Rock Hill</text>
<text x="1073.0" y="687.4" font-size="10.5" fill="#383838" font-style="normal" letter-spacing="-0.15" text-anchor="start">Monroe</text>
<text x="1315.6" y="147.8" font-size="10.5" fill="#383838" font-style="normal" letter-spacing="-0.15" text-anchor="middle">Chambersburg</text>
<text x="1395.4" y="158.4" font-size="10.5" fill="#383838" font-style="normal" letter-spacing="-0.15" text-anchor="middle">York</text>
<text x="1529.0" y="162.9" font-size="12.6" fill="#2c2c2c" font-style="normal" letter-spacing="-0.15" text-anchor="middle">Philadelphia</text>
<text x="1310.6" y="180.2" font-size="10.5" fill="#383838" font-style="normal" letter-spacing="-0.15" text-anchor="middle">Hagerstown</text>
<text x="1372.0" y="187.8" font-size="10.5" fill="#383838" font-style="normal" letter-spacing="-0.15" text-anchor="middle">Westminster</text>
<text x="1496.0" y="183.2" font-size="10.5" fill="#383838" font-style="normal" letter-spacing="-0.15" text-anchor="middle">Wilmington</text>
<text x="1549.0" y="181.0" font-size="11" fill="#8d6a8f" font-style="italic" letter-spacing="-0.2" text-anchor="start">New Jersey</text>
<text x="1336.8" y="205.2" font-size="10.5" fill="#383838" font-style="normal" letter-spacing="-0.15" text-anchor="middle">Frederick</text>
<text x="1406.0" y="206.8" font-size="10.5" fill="#383838" font-style="normal" letter-spacing="-0.15" text-anchor="middle">Towson</text>
<text x="1286.0" y="208.4" font-size="10.5" fill="#383838" font-style="normal" letter-spacing="-0.15" text-anchor="end">Martinsburg</text>
<text x="1541.0" y="212.2" font-size="10.5" fill="#383838" font-style="normal" letter-spacing="-0.15" text-anchor="middle">Vineland</text>
<text x="1359.4" y="234.8" font-size="10.5" fill="#383838" font-style="normal" letter-spacing="-0.15" text-anchor="middle">Columbia</text>
<text x="1422.4" y="233.6" font-size="11" fill="#8d6a8f" font-style="italic" letter-spacing="-0.2" text-anchor="middle">Maryland</text>
<text x="1299.6" y="246.0" font-size="10.5" fill="#383838" font-style="normal" letter-spacing="-0.15" text-anchor="middle">Leesburg</text>
<text x="1498.0" y="247.8" font-size="10.5" fill="#383838" font-style="normal" letter-spacing="-0.15" text-anchor="middle">Dover</text>
<text x="1359.0" y="256.2" font-size="10.5" fill="#383838" font-style="normal" letter-spacing="-0.15" text-anchor="middle">Rockville</text>
<text x="1415.2" y="253.4" font-size="10.5" fill="#383838" font-style="normal" letter-spacing="-0.15" text-anchor="middle">Annapolis</text>
<text x="1506.6" y="267.6" font-size="11" fill="#8d6a8f" font-style="italic" letter-spacing="-0.2" text-anchor="middle">Delaware</text>
<text x="1451.0" y="276.2" font-size="10.5" fill="#383838" font-style="normal" letter-spacing="-0.15" text-anchor="middle">Easton</text>
<text x="1368.8" y="281.9" font-size="12.6" fill="#2c2c2c" font-style="normal" letter-spacing="-0.15" text-anchor="middle">Washington</text>
<text x="1379.6" y="306.4" font-size="10.5" fill="#383838" font-style="normal" letter-spacing="-0.15" text-anchor="middle">Waldorf</text>
<text x="1286.6" y="309.0" font-size="10.5" fill="#383838" font-style="normal" letter-spacing="-0.15" text-anchor="middle">Culpeper</text>
<text x="1535.6" y="312.4" font-size="10.5" fill="#383838" font-style="normal" letter-spacing="-0.15" text-anchor="middle">Ocean</text>
<text x="1492.0" y="321.2" font-size="10.5" fill="#383838" font-style="normal" letter-spacing="-0.15" text-anchor="middle">Salisbury</text>
<text x="1536.0" y="323.8" font-size="10.5" fill="#383838" font-style="normal" letter-spacing="-0.15" text-anchor="middle">City</text>
<text x="1332.6" y="341.8" font-size="10.5" fill="#383838" font-style="normal" letter-spacing="-0.15" text-anchor="middle">Fredericksburg</text>
<text x="1335.0" y="427.1" font-size="12.6" fill="#2c2c2c" font-style="normal" letter-spacing="-0.15" text-anchor="middle">Richmond</text>
<text x="1448.0" y="399.3" font-size="9.2" fill="#6a94bd" font-style="italic" letter-spacing="-0.1" text-anchor="middle">Chesapeake</text>
<text x="1448.0" y="410.3" font-size="9.2" fill="#6a94bd" font-style="italic" letter-spacing="-0.1" text-anchor="middle">Bay</text>
<text x="1337.6" y="457.8" font-size="10.5" fill="#383838" font-style="normal" letter-spacing="-0.15" text-anchor="middle">Petersburg</text>
<text x="1420.6" y="458.8" font-size="10.5" fill="#383838" font-style="normal" letter-spacing="-0.15" text-anchor="middle">Newport</text>
<text x="1420.6" y="469.8" font-size="10.5" fill="#383838" font-style="normal" letter-spacing="-0.15" text-anchor="middle">News</text>
<text x="1459.0" y="498.5" font-size="12.6" fill="#2c2c2c" font-style="normal" letter-spacing="-0.15" text-anchor="middle">Virginia Beach</text>
<text x="1388.6" y="504.4" font-size="10.5" fill="#383838" font-style="normal" letter-spacing="-0.15" text-anchor="middle">Suffolk</text>
<text x="1316.0" y="539.8" font-size="10.5" fill="#383838" font-style="normal" letter-spacing="-0.15" text-anchor="middle">Roanoke</text>
<text x="1316.0" y="550.8" font-size="10.5" fill="#383838" font-style="normal" letter-spacing="-0.15" text-anchor="middle">Rapids</text>
<text x="1438.4" y="531.2" font-size="10.5" fill="#383838" font-style="normal" letter-spacing="-0.15" text-anchor="middle">Elizabeth</text>
<text x="1438.4" y="542.2" font-size="10.5" fill="#383838" font-style="normal" letter-spacing="-0.15" text-anchor="middle">City</text>
<text x="1304.0" y="595.2" font-size="10.5" fill="#383838" font-style="normal" letter-spacing="-0.15" text-anchor="middle">Rocky</text>
<text x="1304.0" y="606.2" font-size="10.5" fill="#383838" font-style="normal" letter-spacing="-0.15" text-anchor="middle">Mount</text>
<text x="1340.0" y="629.8" font-size="10.5" fill="#383838" font-style="normal" letter-spacing="-0.15" text-anchor="middle">Greenville</text>
<text x="1470.0" y="643.7" font-size="9.2" fill="#6a94bd" font-style="italic" letter-spacing="-0.1" text-anchor="middle">Pamlico</text>
<text x="1470.0" y="654.7" font-size="9.2" fill="#6a94bd" font-style="italic" letter-spacing="-0.1" text-anchor="middle">Sound</text>
<text x="1322.4" y="665.4" font-size="10.5" fill="#383838" font-style="normal" letter-spacing="-0.15" text-anchor="middle">Kinston</text>
<text x="1368.2" y="681.8" font-size="10.5" fill="#383838" font-style="normal" letter-spacing="-0.15" text-anchor="middle">New Bern</text>
</g></svg>
<div class="sc" style="left:7.5px;top:538px;width:48px;height:15.500px;border-top:none">50 km</div>
<div class="sc" style="left:7.5px;top:551.500px;width:76.500px;height:17.500px;border-bottom:none">50 mi</div>
<div id="attr"><svg width="12" height="8" viewBox="0 0 12 8" style="vertical-align:-0.500px;margin-right:3px"><rect width="12" height="4" fill="#4c7be1"/><rect y="4" width="12" height="4" fill="#ffd500"/></svg>Leaflet | Map data © OpenStreetMap contributors</div>
</div></div>

<div id="footer">
  <div class="abs" style="left:10px;top:14px;line-height:20px;white-space:nowrap"><span style="letter-spacing:-0.08px">2024-2025 Testing Environment</span></div>
  <svg class="abs" style="left:706px;top:11px" width="28" height="28" viewBox="0 0 28 28"><circle cx="13.800" cy="14" r="13.500" fill="#fff"/><path d="M7.500 8 Q8 4.500 13.800 4.500 Q19.600 4.500 20.100 8 L20.600 20 Q20.600 21.500 19 21.500 L8.600 21.500 Q7 21.500 7 20 Z" fill="#f5b71c"/><path d="M8.600 8.300 Q13.800 6.800 19 8.300 L19.200 12.500 L8.400 12.500 Z" fill="#fff" stroke="#333" stroke-width="0.600"/><rect x="4.500" y="9" width="2.200" height="3.600" rx="0.600" fill="#333"/><rect x="20.900" y="9" width="2.200" height="3.600" rx="0.600" fill="#333"/><circle cx="9.600" cy="15.500" r="1.100" fill="#fff" stroke="#333" stroke-width="0.400"/><circle cx="18" cy="15.500" r="1.100" fill="#fff" stroke="#333" stroke-width="0.400"/><path d="M10.500 17.500 Q13.800 19.500 17.100 17.500" fill="none" stroke="#8a5a00" stroke-width="0.800"/><rect x="8" y="21" width="2.800" height="3.400" rx="0.800" fill="#222"/><rect x="16.800" y="21" width="2.800" height="3.400" rx="0.800" fill="#222"/></svg>
  <div class="abs" style="left:738px;top:14px;line-height:20px;white-space:nowrap"><span style="letter-spacing:-0.27px">© 2025 BusPlanner Inc.</span></div>
  <div id="lang"><div class="g"><svg class="abs" style="left:7.500px;top:7.500px" width="14" height="14" viewBox="0 0 14 14"><circle cx="7" cy="7" r="6.500" fill="#222"/><path d="M3 3.500 Q5 2 6.500 3 L6 5 L4 6.500 L5.500 8 L5 10.500 Q3 9.500 2 7 Q2 5 3 3.500 Z M8.500 2.500 L10.500 3.500 L11.500 6 L10 7 L8.500 6 L9 4.500 Z M8 8.500 L10 8.500 L9.500 11 L8 11.500 Z" fill="#fff"/></svg></div><span class="abs" style="left:37px;top:0;font-size:13.800px;white-space:nowrap"><span style="letter-spacing:-0.50px">English (United States)</span></span>
    <svg class="abs" style="left:241px;top:10px" width="14" height="9" viewBox="0 0 14 9"><path d="M1.500 1.500 L7 7 L12.500 1.500" fill="none" stroke="#222" stroke-width="1.700" stroke-linecap="round" stroke-linejoin="round"/></svg>
  </div>
  <svg class="abs" style="left:1508px;top:4.500px" width="88" height="36" viewBox="0 0 88 36"><circle cx="15.700" cy="16.200" r="9.600" fill="none" stroke="#f9b233" stroke-width="1.700"/><path d="M20.800 5 L10.100 18.800 L15.600 18.800 L11.400 28.100 L23.700 13.800 L17.600 13.800 Z" fill="#f9b233" stroke="#00244d" stroke-width="0.700"/><text x="27.500" y="25.500" font-family="Liberation Sans, sans-serif" font-size="23.500" stroke="#f9b233" stroke-width="0.400" font-weight="bold" textLength="52.500" lengthAdjust="spacingAndGlyphs" fill="#f9b233">Quick</text></svg>
</div>
</body>
</html>
